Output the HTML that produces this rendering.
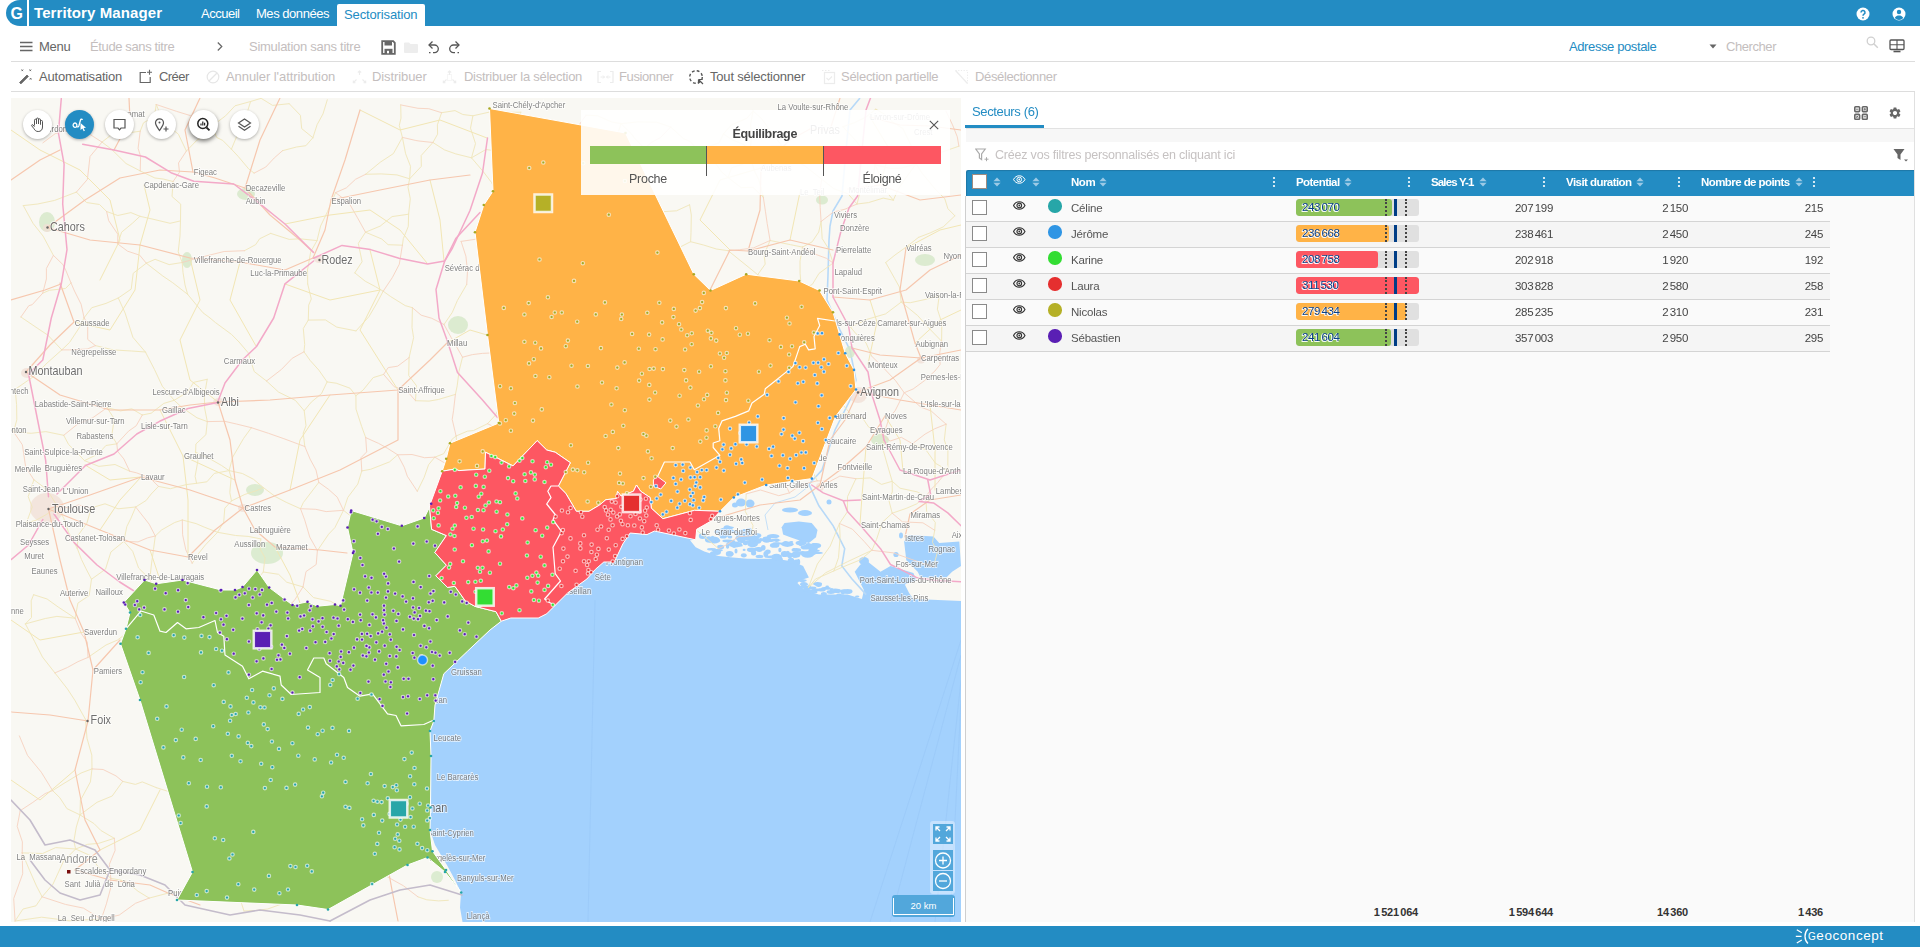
<!DOCTYPE html>
<html lang="fr">
<head>
<meta charset="utf-8">
<title>Territory Manager</title>
<style>
*{box-sizing:border-box;margin:0;padding:0}
html,body{width:1920px;height:947px;overflow:hidden;background:#fff;font-family:"Liberation Sans",sans-serif;font-size:13px;color:#444}
.abs{position:absolute}
.t{position:absolute;white-space:nowrap;line-height:1}
#topbar{position:absolute;left:6px;top:0;width:1914px;height:26px;background:#238cc3;border-radius:14px 0 0 14px/13px 0 0 13px}
#topbar .sep{position:absolute;left:21px;top:0;width:2px;height:26px;background:#fff}
#footer{position:absolute;left:0;top:926px;width:1920px;height:21px;background:#238cc3}
.hline{position:absolute;height:1px;background:#ddd}
.dis{color:#c4bebe}
.tb{position:absolute;top:70px;font-size:13px;line-height:14px;white-space:nowrap}
#map{position:absolute;left:11px;top:98px;width:950px;height:824px;background:#f9f8f4;overflow:hidden}
#panel{position:absolute;left:0;top:0;width:0;height:0}
.pbg{position:absolute;left:966px;width:949px}
.th{position:absolute;top:176px;font-size:11.5px;font-weight:bold;color:#fff;white-space:nowrap;line-height:13px;letter-spacing:-.45px}
.row{position:absolute;left:966px;width:864px;height:26px;border-bottom:1px solid #d4d4d4}
.cb{position:absolute;left:972px;width:15px;height:15px;background:#fff;border:1px solid #8a8a8a}
.dot{position:absolute;left:1048px;width:13.5px;height:13.5px;border-radius:50%}
  .nm{position:absolute;left:1071px;font-size:11.5px;color:#555;white-space:nowrap;line-height:14px;letter-spacing:-.2px}
.num{position:absolute;font-size:11.5px;color:#444;white-space:nowrap;line-height:13px;text-align:right;width:80px;letter-spacing:-.3px;word-spacing:-1.5px}
.bar{position:absolute;left:1296px;width:123px;height:17px;background:#e0e0e0;border-radius:3px;overflow:hidden}
.bar i{position:absolute;left:0;top:0;height:17px;display:block;border-radius:3px}
.bv{position:absolute;left:1302px;font-size:11.5px;color:#0a4189;white-space:nowrap;line-height:13px;letter-spacing:-.35px;word-spacing:-1.6px;text-shadow:-1px 1px 0 rgba(255,255,255,.9),0 1px 0 rgba(255,255,255,.9),-1px 0 0 rgba(255,255,255,.6)}
.dl{position:absolute;width:0;height:17px;border-left:2px dotted #444}
.sl{position:absolute;left:1394px;width:3px;height:17px;background:#003d86}
.tot{position:absolute;top:906px;font-size:11px;font-weight:bold;color:#333;white-space:nowrap;line-height:13px;text-align:right;width:80px;letter-spacing:-.2px;word-spacing:-1.5px}
.mbtn{position:absolute;top:110px;width:29px;height:29px;border-radius:50%;background:#fff;box-shadow:0 1px 3px rgba(0,0,0,.35)}
</style>
</head>
<body>
<!-- TOP BAR -->
<div id="topbar"><div class="sep"></div></div>
<div class="t" style="left:10.500px;top:6px;font-size:16px;font-weight:bold;color:#fff">G</div>
<div class="t" id="brand" style="left:34px;top:5px;font-size:15px;font-weight:bold;color:#fff;letter-spacing:.1px">Territory Manager</div>
<div class="t" id="nav1" style="letter-spacing:-0.5px;left:201px;top:7px;font-size:13px;color:#fff">Accueil</div>
<div class="t" id="nav2" style="letter-spacing:-0.46px;left:256px;top:7px;font-size:13px;color:#fff">Mes données</div>
<div class="abs" style="left:337px;top:4px;width:88px;height:22px;background:#fff;border-radius:2px 2px 0 0"></div>
<div class="t" id="nav3" style="letter-spacing:-0.13px;left:344px;top:8px;font-size:13px;color:#238cc3">Sectorisation</div>

<!-- ROW 2 -->
<div class="t" id="menu" style="letter-spacing:-0.3px;left:39px;top:40px;font-size:13px;color:#666">Menu</div>
<div class="t dis" id="etude" style="letter-spacing:-0.375px;left:90px;top:40px;font-size:13px">Étude sans titre</div>
<div class="t dis" id="simu" style="letter-spacing:-0.27px;left:249px;top:40px;font-size:13px">Simulation sans titre</div>
<div class="t" id="adr" style="letter-spacing:-0.39px;left:1569px;top:40px;font-size:13px;color:#238cc3">Adresse postale</div>
<div class="t dis" id="cher" style="letter-spacing:-0.43px;left:1726px;top:40px;font-size:13px">Chercher</div>
<div class="hline" style="left:11px;top:61px;width:1904px"></div>

<!-- ROW 3 -->
<div class="tb" id="tb1" style="letter-spacing:-0.21px;left:39px;color:#666">Automatisation</div>
<div class="tb" id="tb2" style="letter-spacing:-0.56px;left:159px;color:#666">Créer</div>
<div class="tb dis" id="tb3" style="letter-spacing:-0.08px;left:226px">Annuler l'attribution</div>
<div class="tb dis" id="tb4" style="letter-spacing:-0.09px;left:372px">Distribuer</div>
<div class="tb dis" id="tb5" style="letter-spacing:-0.27px;left:464px">Distribuer la sélection</div>
<div class="tb dis" id="tb6" style="letter-spacing:-0.39px;left:619px">Fusionner</div>
<div class="tb" id="tb7" style="letter-spacing:-0.19px;left:710px;color:#666">Tout sélectionner</div>
<div class="tb dis" id="tb8" style="letter-spacing:-0.28px;left:841px">Sélection partielle</div>
<div class="tb dis" id="tb9" style="letter-spacing:-0.36px;left:975px">Désélectionner</div>
<div class="hline" style="left:11px;top:91px;width:1904px"></div>


<!-- ICONS -->
<svg class="abs" style="left:20px;top:41px" width="13" height="11" viewBox="0 0 13 11"><path d="M0 1.500h12.500M0 5.500h12.500M0 9.500h12.500" stroke="#666" stroke-width="1.400"/></svg>
<svg class="abs" style="left:216px;top:41px" width="8" height="11" viewBox="0 0 8 11"><path d="M1.800 1.500l4 4-4 4" fill="none" stroke="#666" stroke-width="1.200"/></svg>
<svg class="abs" style="left:381px;top:40px" width="15" height="15" viewBox="0 0 15 15"><path d="M1.200 1.200h11l1.600 1.600v11H1.200z" fill="none" stroke="#666" stroke-width="1.800"/><rect x="3.500" y="1.500" width="7.500" height="4" fill="#666"/><rect x="3.500" y="8.800" width="8" height="5" fill="#666"/><rect x="6" y="10.800" width="2" height="2.500" fill="#fff"/></svg>
<svg class="abs" style="left:404px;top:42px" width="14" height="11" viewBox="0 0 14 11"><path d="M0 1.500a1 1 0 0 1 1-1h4l1.500 1.500H13a1 1 0 0 1 1 1V10a1 1 0 0 1-1 1H1a1 1 0 0 1-1-1z" fill="#ededed"/></svg>
<svg class="abs" style="left:427px;top:40px" width="13" height="14" viewBox="0 0 13 14"><path d="M5.500 1.500L2 5l3.500 3.500" fill="none" stroke="#555" stroke-width="1.300"/><path d="M2.200 5H7.500a3.800 3.800 0 0 1 0 7.600H6" fill="none" stroke="#555" stroke-width="1.300"/><path d="M2 12.600h1.500" stroke="#555" stroke-width="1.300"/></svg>
<svg class="abs" style="left:448px;top:40px" width="13" height="14" viewBox="0 0 13 14"><path d="M7.500 1.500L11 5 7.500 8.500" fill="none" stroke="#555" stroke-width="1.300"/><path d="M10.800 5H5.500a3.800 3.800 0 0 0 0 7.600H7" fill="none" stroke="#555" stroke-width="1.300"/><path d="M9.500 12.600H11" stroke="#555" stroke-width="1.300"/></svg>
<svg class="abs" style="left:1709px;top:44px" width="8" height="5" viewBox="0 0 8 5"><path d="M.5.500h7L4 4.500z" fill="#666"/></svg>
<svg class="abs" style="left:1866px;top:36px" width="13" height="13" viewBox="0 0 13 13"><circle cx="5" cy="5" r="3.800" fill="none" stroke="#d0d0d0" stroke-width="1.300"/><path d="M7.800 7.800l4 4" stroke="#d0d0d0" stroke-width="1.500"/></svg>
<svg class="abs" style="left:1889px;top:39px" width="16" height="14" viewBox="0 0 16 14"><rect x="1" y="1" width="14" height="9.500" rx="1" fill="none" stroke="#555" stroke-width="1.300"/><path d="M1 5.700h14M8 1v9.500" stroke="#555" stroke-width="1.100"/><path d="M4.500 12.500h7" stroke="#555" stroke-width="1.600"/></svg>
<svg class="abs" style="left:1856px;top:7px" width="14" height="14" viewBox="0 0 14 14"><circle cx="7" cy="7" r="6.500" fill="#fff"/><path d="M5 5.500a2 2 0 1 1 3 1.700c-.7.500-1 .8-1 1.600" fill="none" stroke="#238cc3" stroke-width="1.500"/><circle cx="7" cy="10.800" r=".9" fill="#238cc3"/></svg>
<svg class="abs" style="left:1892px;top:7px" width="14" height="14" viewBox="0 0 14 14"><circle cx="7" cy="7" r="6.500" fill="#fff"/><circle cx="7" cy="5" r="2.200" fill="#238cc3"/><path d="M2.800 10.800c1-1.800 2.600-2.400 4.200-2.400s3.200.6 4.200 2.400c-1 1.500-2.600 2.200-4.200 2.200s-3.200-.7-4.200-2.200z" fill="#238cc3"/></svg>
<!-- row3 icons -->
<svg class="abs" style="left:18px;top:68px" width="16" height="17" viewBox="0 0 16 17"><path d="M1.500 14.500l7.500-7.500 1.400 1.400-7.500 7.500z" fill="#666" stroke="#666" stroke-width=".8" stroke-linejoin="round"/><path d="M3.500 1.500l1.600 1.600M5.100 1.500L3.500 3.100M11.500 1.500l1.600 1.600M13.100 1.500l-1.600 1.600M11.800 10l1.600 1.600M13.400 10l-1.600 1.600" stroke="#666" stroke-width=".9"/></svg>
<svg class="abs" style="left:139px;top:69px" width="14" height="15" viewBox="0 0 14 15"><path d="M7 3.500H1.200v10h10V8" fill="none" stroke="#666" stroke-width="1.200"/><path d="M10.500.8v5M8 3.300h5" stroke="#666" stroke-width="1.100"/></svg>
<svg class="abs" style="left:206px;top:70px" width="14" height="14" viewBox="0 0 14 14"><circle cx="7" cy="7" r="5.800" fill="none" stroke="#e6e6e6" stroke-width="1.200"/><path d="M3 11L11 3" stroke="#e6e6e6" stroke-width="1.200"/></svg>
<svg class="abs" style="left:352px;top:70px" width="15" height="14" viewBox="0 0 15 14"><path d="M7.500 1v4M5.800 2.500L7.500 1l1.700 1.500M1.500 12.500l3-3M1.300 10.500v2.200h2.200M13.500 12.500l-3-3M13.700 10.500v2.200h-2.200" fill="none" stroke="#ececec" stroke-width="1.100"/></svg>
<svg class="abs" style="left:442px;top:70px" width="15" height="14" viewBox="0 0 15 14"><path d="M7.500 1v4M5.800 2.500L7.500 1l1.700 1.500M1.500 12.500l3-3M1.300 10.500v2.200h2.200M13.500 12.500l-3-3M13.700 10.500v2.200h-2.200" fill="none" stroke="#ececec" stroke-width="1.100"/><rect x="5.500" y="4.500" width="4" height="6" fill="none" stroke="#ececec" stroke-dasharray="1 1"/></svg>
<svg class="abs" style="left:597px;top:70px" width="17" height="14" viewBox="0 0 17 14"><path d="M4 1.500H1v11h3M13 1.500h3v11h-3" fill="none" stroke="#ececec" stroke-width="1.200"/><path d="M3.500 7h4M6 5.500L7.500 7 6 8.500M13.500 7h-4M11 5.500L9.500 7 11 8.500" fill="none" stroke="#ececec" stroke-width="1"/></svg>
<svg class="abs" style="left:688px;top:69px" width="17" height="17" viewBox="0 0 17 17"><circle cx="8" cy="8" r="6.300" fill="none" stroke="#555" stroke-width="1.400" stroke-dasharray="2.800 2.150"/><path d="M10.500 10.500h4M10.500 10.500v4M10.500 10.500l4.500 4.500" stroke="#555" stroke-width="1.200" fill="none"/></svg>
<svg class="abs" style="left:821px;top:69px" width="15" height="16" viewBox="0 0 15 16"><rect x="3.500" y="3.500" width="10" height="11" fill="none" stroke="#ececec" stroke-width="1.200"/><path d="M5.500 9l2 2 3.500-3.500" fill="none" stroke="#ececec" stroke-width="1.200"/><path d="M1 1.500h8" stroke="#ececec" stroke-dasharray="1.500 1.500"/></svg>
<svg class="abs" style="left:954px;top:69px" width="15" height="16" viewBox="0 0 15 16"><path d="M1.500 1.500l12 13" stroke="#ececec" stroke-width="1.200"/><path d="M1.500 1.500h12v13" fill="none" stroke="#ececec" stroke-dasharray="1.200 1.500"/></svg>

<!-- MAP -->
<div id="map">
<svg width="950" height="824" viewBox="11 98 950 824" style="position:absolute;left:0;top:0;font-family:'Liberation Sans',sans-serif">
<rect x="11" y="98" width="950" height="824" fill="#f9f8f3"/>
<polygon points="462.5,922.0 460.0,907.5 461.0,892.5 455.0,880.0 447.5,866.0 435.0,845.0 430.0,830.0 430.5,807.5 431.0,756.0 430.0,731.0 433.8,721.0 435.0,705.0 443.8,673.8 467.5,651.2 490.0,630.0 501.3,621.2 510.8,618.0 538.3,618.0 546.7,613.8 555.2,605.3 567.9,592.7 586.9,579.0 595.3,569.4 603.8,562.0 614.3,562.0 622.8,544.0 630.2,533.0 647.0,534.6 654.5,531.0 695.7,539.8 690.0,540.2 695.7,547.3 704.3,551.6 718.6,555.9 733.0,557.5 747.3,558.8 775.9,558.8 793.1,561.6 803.1,565.9 808.9,577.4 800.3,580.3 797.4,583.1 804.6,590.3 818.9,594.6 847.5,594.6 861.9,598.9 864.0,590.3 854.7,571.7 860.4,564.5 867.6,561.6 880.5,571.7 890.5,565.9 913.4,573.1 916.3,580.3 904.8,584.6 909.1,593.1 913.4,598.9 926.3,599.6 961.0,601.0 961.0,922.0" fill="#a3d1fd"/>
<g fill="#a3d1fd">
<polygon points="781.7,527.3 784.5,523.0 798.9,521.5 811.7,523.0 817.5,530.1 816.0,537.3 808.9,543.0 798.9,540.2 790.3,537.3 783.1,534.4"/>
<polygon points="904.1,541.6 909.1,535.1 933.5,536.6 939.2,543.0 959.3,541.6 961.0,565.9 952.1,571.7 946.4,577.4 920.6,577.4 917.7,571.7 906.3,560.2"/>
<ellipse cx="896" cy="554.5" rx="2.6" ry="2.6"/><ellipse cx="901" cy="535.5" rx="2" ry="3"/><ellipse cx="741" cy="502.5" rx="5" ry="4"/><ellipse cx="750" cy="503.5" rx="4.5" ry="4"/><ellipse cx="735" cy="505" rx="3" ry="2.500"/><ellipse cx="790" cy="510" rx="8" ry="2.500"/><ellipse cx="805" cy="513" rx="7" ry="3"/><ellipse cx="829" cy="502" rx="2.500" ry="2.500"/><ellipse cx="814" cy="547" rx="4" ry="4"/><ellipse cx="864" cy="561" rx="5" ry="4"/>
<ellipse cx="776.5" cy="556.9" rx="5.5" ry="3.1"/>
<ellipse cx="816.9" cy="552.9" rx="6.0" ry="1.2"/>
<ellipse cx="757.1" cy="535.6" rx="4.2" ry="2.3"/>
<ellipse cx="724.4" cy="534.3" rx="6.4" ry="2.9"/>
<ellipse cx="765.9" cy="554.1" rx="2.5" ry="3.1"/>
<ellipse cx="743.5" cy="532.1" rx="2.2" ry="1.1"/>
<ellipse cx="736.0" cy="550.9" rx="1.5" ry="2.5"/>
<ellipse cx="740.6" cy="538.3" rx="5.6" ry="2.1"/>
<ellipse cx="737.8" cy="545.7" rx="5.0" ry="1.1"/>
<ellipse cx="792.5" cy="561.3" rx="1.6" ry="2.7"/>
<ellipse cx="744.1" cy="549.9" rx="1.5" ry="1.1"/>
<ellipse cx="741.4" cy="540.3" rx="4.1" ry="2.7"/>
<ellipse cx="798.5" cy="562.0" rx="1.7" ry="3.1"/>
<ellipse cx="709.5" cy="539.7" rx="4.6" ry="3.0"/>
<ellipse cx="766.7" cy="538.4" rx="3.1" ry="1.4"/>
<ellipse cx="749.1" cy="535.2" rx="4.5" ry="2.8"/>
<ellipse cx="755.4" cy="543.1" rx="1.8" ry="3.0"/>
<ellipse cx="777.4" cy="558.9" rx="2.0" ry="2.0"/>
<ellipse cx="735.1" cy="544.5" rx="6.5" ry="2.9"/>
<ellipse cx="759.5" cy="556.4" rx="3.9" ry="1.6"/>
<ellipse cx="748.9" cy="531.3" rx="3.4" ry="3.2"/>
<ellipse cx="760.9" cy="539.6" rx="1.9" ry="1.6"/>
<ellipse cx="796.5" cy="562.3" rx="3.3" ry="2.7"/>
<ellipse cx="795.6" cy="554.9" rx="4.8" ry="2.7"/>
<ellipse cx="743.8" cy="555.3" rx="2.9" ry="2.1"/>
<ellipse cx="795.0" cy="554.7" rx="3.0" ry="3.1"/>
<ellipse cx="779.9" cy="550.0" rx="1.6" ry="2.2"/>
<ellipse cx="729.6" cy="553.9" rx="3.8" ry="2.8"/>
<ellipse cx="779.6" cy="559.3" rx="3.2" ry="2.4"/>
<ellipse cx="791.0" cy="560.6" rx="3.3" ry="2.9"/>
<ellipse cx="807.6" cy="554.6" rx="6.4" ry="3.1"/>
<ellipse cx="763.3" cy="547.8" rx="2.3" ry="2.8"/>
<ellipse cx="816.1" cy="545.5" rx="5.0" ry="2.6"/>
<ellipse cx="796.3" cy="550.0" rx="4.8" ry="1.9"/>
<ellipse cx="776.6" cy="558.3" rx="4.7" ry="2.6"/>
<ellipse cx="753.6" cy="553.0" rx="2.6" ry="2.5"/>
<ellipse cx="757.4" cy="534.7" rx="1.8" ry="1.3"/>
<ellipse cx="738.0" cy="532.8" rx="2.5" ry="1.1"/>
<ellipse cx="756.6" cy="541.4" rx="4.6" ry="2.3"/>
<ellipse cx="733.1" cy="542.6" rx="2.1" ry="2.8"/>
<ellipse cx="766.7" cy="539.6" rx="4.4" ry="3.1"/>
<ellipse cx="801.1" cy="543.0" rx="5.6" ry="2.4"/>
<ellipse cx="744.5" cy="531.1" rx="4.5" ry="2.2"/>
<ellipse cx="774.7" cy="540.1" rx="6.0" ry="1.0"/>
<ellipse cx="711.6" cy="549.3" rx="4.6" ry="1.3"/>
<ellipse cx="745.4" cy="543.6" rx="2.6" ry="1.6"/>
<ellipse cx="773.1" cy="536.2" rx="6.4" ry="2.1"/>
<ellipse cx="750.4" cy="538.7" rx="6.4" ry="2.1"/>
<ellipse cx="734.1" cy="545.5" rx="2.1" ry="2.4"/>
<ellipse cx="753.9" cy="537.6" rx="5.4" ry="2.8"/>
<ellipse cx="731.7" cy="531.7" rx="6.4" ry="1.6"/>
<ellipse cx="774.6" cy="545.4" rx="4.7" ry="2.3"/>
<ellipse cx="765.2" cy="539.5" rx="3.0" ry="2.2"/>
<ellipse cx="756.5" cy="540.5" rx="5.2" ry="2.3"/>
<ellipse cx="702.6" cy="535.9" rx="3.8" ry="3.0"/>
<ellipse cx="809.9" cy="548.5" rx="1.6" ry="2.7"/>
<ellipse cx="751.9" cy="549.8" rx="5.0" ry="2.4"/>
<ellipse cx="746.6" cy="541.9" rx="5.8" ry="1.4"/>
<ellipse cx="785.5" cy="543.6" rx="2.9" ry="2.7"/>
<ellipse cx="758.3" cy="548.6" rx="4.0" ry="1.7"/>
<ellipse cx="717.3" cy="550.2" rx="5.6" ry="1.2"/>
<ellipse cx="797.8" cy="553.5" rx="1.6" ry="2.6"/>
<ellipse cx="716.9" cy="551.3" rx="3.6" ry="1.4"/>
<ellipse cx="711.6" cy="541.3" rx="1.9" ry="1.1"/>
<ellipse cx="770.5" cy="556.9" rx="5.9" ry="1.3"/>
<ellipse cx="752.4" cy="538.5" rx="4.5" ry="2.1"/>
<ellipse cx="717.0" cy="552.1" rx="4.0" ry="3.0"/>
<ellipse cx="767.9" cy="551.7" rx="2.8" ry="2.2"/>
<ellipse cx="727.5" cy="541.0" rx="5.2" ry="1.4"/>
<ellipse cx="787.9" cy="553.2" rx="1.9" ry="2.5"/>
<ellipse cx="808.5" cy="545.7" rx="3.1" ry="2.8"/>
<ellipse cx="726.1" cy="530.0" rx="6.4" ry="2.5"/>
<ellipse cx="776.7" cy="540.2" rx="2.7" ry="1.7"/>
<ellipse cx="775.3" cy="540.0" rx="3.4" ry="1.3"/>
<ellipse cx="802.7" cy="552.9" rx="5.5" ry="2.0"/>
<ellipse cx="805.3" cy="547.3" rx="4.5" ry="2.3"/>
<ellipse cx="791.3" cy="542.0" rx="2.0" ry="1.1"/>
<ellipse cx="810.0" cy="545.7" rx="5.3" ry="1.0"/>
<ellipse cx="776.1" cy="543.4" rx="3.8" ry="1.2"/>
<ellipse cx="717.5" cy="531.8" rx="3.4" ry="1.8"/>
<ellipse cx="730.0" cy="536.9" rx="2.3" ry="1.6"/>
<ellipse cx="727.6" cy="545.7" rx="1.7" ry="3.0"/>
<ellipse cx="784.7" cy="554.0" rx="3.9" ry="3.1"/>
<ellipse cx="712.9" cy="553.7" rx="3.0" ry="2.5"/>
<ellipse cx="727.0" cy="528.4" rx="3.5" ry="3.1"/>
<ellipse cx="743.9" cy="538.4" rx="3.8" ry="1.6"/>
<ellipse cx="790.3" cy="555.9" rx="2.3" ry="1.5"/>
<ellipse cx="779.4" cy="543.5" rx="6.4" ry="1.0"/>
<ellipse cx="763.4" cy="540.1" rx="2.0" ry="1.2"/>
<ellipse cx="811.2" cy="546.1" rx="6.2" ry="1.1"/>
<ellipse cx="730.2" cy="542.5" rx="3.0" ry="1.1"/>
<ellipse cx="720.6" cy="546.9" rx="3.5" ry="2.2"/>
<ellipse cx="708.6" cy="538.5" rx="2.0" ry="2.2"/>
<ellipse cx="814.1" cy="550.7" rx="5.8" ry="1.5"/>
<ellipse cx="759.3" cy="549.6" rx="3.4" ry="2.4"/>
<ellipse cx="736.8" cy="544.3" rx="5.6" ry="1.5"/>
<ellipse cx="712.6" cy="538.4" rx="1.9" ry="2.7"/>
<ellipse cx="728.9" cy="528.6" rx="3.6" ry="2.3"/>
<ellipse cx="728.9" cy="527.6" rx="5.0" ry="1.1"/>
<ellipse cx="723.2" cy="537.3" rx="3.4" ry="1.2"/>
<ellipse cx="751.0" cy="538.5" rx="5.3" ry="2.2"/>
<ellipse cx="810.9" cy="553.1" rx="5.3" ry="2.3"/>
<ellipse cx="789.7" cy="555.2" rx="2.8" ry="2.8"/>
<ellipse cx="746.2" cy="530.6" rx="1.8" ry="1.4"/>
<ellipse cx="731.1" cy="554.1" rx="2.9" ry="1.1"/>
<ellipse cx="794.2" cy="549.0" rx="1.6" ry="1.1"/>
<ellipse cx="714.4" cy="540.4" rx="5.8" ry="3.1"/>
<ellipse cx="752.0" cy="540.6" rx="3.2" ry="1.0"/>
<ellipse cx="787.4" cy="544.2" rx="6.2" ry="2.7"/>
<ellipse cx="712.9" cy="538.6" rx="6.1" ry="2.0"/>
<ellipse cx="752.7" cy="544.0" rx="5.3" ry="3.1"/>
<ellipse cx="800.6" cy="543.0" rx="1.8" ry="3.2"/>
<ellipse cx="747.5" cy="534.3" rx="2.9" ry="1.4"/>
<ellipse cx="768.9" cy="540.4" rx="5.3" ry="1.5"/>
<ellipse cx="742.3" cy="535.7" rx="6.4" ry="2.8"/>
<ellipse cx="800.5" cy="579.9" rx="1.8" ry="2.1"/>
<ellipse cx="839.1" cy="594.4" rx="2.8" ry="1.0"/>
<ellipse cx="831.8" cy="589.5" rx="2.1" ry="1.6"/>
<ellipse cx="818.6" cy="584.8" rx="3.2" ry="2.1"/>
<ellipse cx="843.7" cy="591.4" rx="3.4" ry="2.2"/>
<ellipse cx="821.9" cy="589.7" rx="3.9" ry="1.8"/>
<ellipse cx="803.8" cy="584.2" rx="3.5" ry="2.1"/>
<ellipse cx="847.7" cy="591.4" rx="4.8" ry="2.3"/>
<ellipse cx="811.8" cy="587.9" rx="4.6" ry="1.4"/>
<ellipse cx="809.0" cy="590.6" rx="4.2" ry="1.3"/>
<ellipse cx="826.1" cy="588.2" rx="4.7" ry="1.5"/>
<ellipse cx="816.5" cy="589.9" rx="4.9" ry="1.3"/>
<ellipse cx="835.1" cy="589.9" rx="2.1" ry="1.3"/>
<ellipse cx="837.2" cy="590.9" rx="3.9" ry="2.1"/>
<ellipse cx="813.1" cy="592.0" rx="4.4" ry="1.7"/>
<ellipse cx="804.7" cy="580.5" rx="2.0" ry="1.1"/>
<ellipse cx="808.0" cy="590.2" rx="1.9" ry="2.1"/>
<ellipse cx="802.3" cy="580.7" rx="2.8" ry="1.7"/>
<ellipse cx="842.9" cy="593.1" rx="1.8" ry="1.6"/>
<ellipse cx="805.8" cy="589.7" rx="2.8" ry="2.0"/>
<ellipse cx="848.1" cy="592.6" rx="2.5" ry="1.2"/>
<ellipse cx="830.9" cy="592.0" rx="4.3" ry="1.9"/>
<ellipse cx="817.5" cy="583.7" rx="4.5" ry="1.8"/>
<ellipse cx="813.7" cy="591.3" rx="1.8" ry="1.4"/>
<ellipse cx="804.3" cy="587.0" rx="4.9" ry="1.8"/>
<ellipse cx="804.1" cy="584.2" rx="4.3" ry="1.0"/>
<ellipse cx="827.2" cy="586.9" rx="1.8" ry="1.4"/>
<ellipse cx="823.9" cy="593.9" rx="3.0" ry="1.9"/>
<ellipse cx="809.2" cy="586.5" rx="1.8" ry="1.6"/>
<ellipse cx="857.2" cy="596.4" rx="2.2" ry="1.0"/>
</g>
<polyline points="860,98 850,110 846,150 842,196 833,211 830,226 829,240 828,275 827,300 840,330 850,350 856,380 850,400 835,430 822,470 808.9,484.3 818.9,505.8 833.2,525.8 844.7,548.7 841.8,565.9 851.8,578.8 866.2,594.6" fill="none" stroke="#b7d9f8" stroke-width="1.600"/>
<polyline points="809,486 795,497 775,503 765,515 768,530" fill="none" stroke="#c4e0f8" stroke-width="1"/>
<g fill="#d5e8c8" opacity=".8"><ellipse cx="267" cy="553" rx="16" ry="11"/><ellipse cx="255" cy="490" rx="9" ry="6"/><ellipse cx="458" cy="325" rx="10" ry="9"/><ellipse cx="47" cy="222" rx="8" ry="10"/><ellipse cx="246" cy="194" rx="9" ry="6"/><ellipse cx="187" cy="260" rx="5" ry="8"/><ellipse cx="925" cy="260" rx="10" ry="6"/><ellipse cx="880" cy="440" rx="9" ry="6"/><ellipse cx="437" cy="877" rx="6" ry="6"/><ellipse cx="822" cy="200" rx="6" ry="4.500"/><ellipse cx="850" cy="352" rx="5" ry="6"/></g>
<g fill="#f1dfd6" opacity=".75"><ellipse cx="47" cy="508" rx="17" ry="15"/><ellipse cx="27" cy="373" rx="6" ry="5"/><ellipse cx="219" cy="402" rx="6" ry="4"/><ellipse cx="243" cy="508" rx="5" ry="4"/><ellipse cx="858" cy="395" rx="9" ry="8"/><ellipse cx="319" cy="259" rx="5" ry="4"/><ellipse cx="47" cy="228" rx="4" ry="4"/><ellipse cx="820" cy="487" rx="4" ry="4"/><ellipse cx="921" cy="360" rx="4" ry="3.500"/></g>
<g fill="none" stroke="#96c6f6" stroke-width=".8" opacity=".7"><path d="M595 600L588 922M961 640L870 922M961 655L890 922M961 680L935 922M961 700L950 922"/></g>
<g fill="none" stroke="#f1e7ba" stroke-width="1" stroke-linejoin="round" stroke-linecap="round" opacity="0.9">
<polyline points="439.3,560.0 443.0,573.9 447.1,584.6 446.4,596.2"/>
<polyline points="439.3,560.0 430.9,555.9 420.4,547.3 405.3,543.5"/>
<polyline points="439.3,560.0 452.2,549.8 465.5,545.6 478.9,541.2"/>
<polyline points="892.2,481.3 892.3,492.0 888.7,499.6 892.2,513.2"/>
<polyline points="892.2,481.3 881.6,484.4 870.4,477.9 855.9,478.7"/>
<polyline points="492.5,583.1 506.6,576.7 519.1,571.8 527.4,566.4"/>
<polyline points="492.5,583.1 487.8,568.0 487.4,551.5 478.9,541.2"/>
<polyline points="182.3,520.0 174.7,522.5 161.5,530.0 155.3,536.0"/>
<polyline points="182.3,520.0 196.1,523.6 204.2,527.1 217.6,532.3"/>
<polyline points="92.0,768.9 81.1,773.0 62.0,784.6 52.6,790.6"/>
<polyline points="92.0,768.9 90.4,781.9 80.4,800.4 80.0,814.9"/>
<polyline points="670.7,127.0 683.4,138.6 690.3,141.6 698.7,151.0"/>
<polyline points="670.7,127.0 656.5,122.2 637.6,121.9 621.0,123.7"/>
<polyline points="156.2,104.5 154.5,116.4 143.5,122.8 140.2,131.2"/>
<polyline points="156.2,104.5 163.6,122.0 178.4,134.2 186.4,151.0"/>
<polyline points="512.2,141.8 517.7,131.9 519.1,121.0 520.8,112.2"/>
<polyline points="512.2,141.8 496.1,150.9 485.9,149.5 471.5,157.8"/>
<polyline points="187.6,294.3 195.8,304.2 203.0,312.8 209.4,317.5"/>
<polyline points="187.6,294.3 185.0,284.9 183.0,272.4 182.2,262.5"/>
<polyline points="187.6,294.3 172.7,282.7 162.8,276.0 146.3,263.2"/>
<polyline points="33.9,479.8 44.5,487.7 50.7,495.5 57.4,506.3"/>
<polyline points="33.9,479.8 28.2,496.6 32.2,507.1 26.3,523.1"/>
<polyline points="427.9,796.3 414.8,794.2 400.5,795.4 382.2,796.8"/>
<polyline points="307.7,284.0 311.3,299.0 308.7,305.1 308.3,320.1"/>
<polyline points="307.7,284.0 307.5,270.0 310.7,251.8 317.0,240.6"/>
<polyline points="282.5,150.7 296.5,147.0 305.9,145.7 312.9,137.7"/>
<polyline points="740.6,426.7 749.3,433.9 761.1,442.2 768.8,447.7"/>
<polyline points="817.7,415.1 832.2,413.0 838.8,413.7 850.1,413.4"/>
<polyline points="817.7,415.1 811.3,427.1 807.1,437.5 803.9,444.5"/>
<polyline points="946.1,424.2 944.3,439.9 947.9,451.0 947.8,470.3"/>
<polyline points="75.1,618.2 77.9,603.1 89.2,595.5 91.5,579.2"/>
<polyline points="752.4,317.5 759.0,325.2 769.3,338.8 775.9,346.8"/>
<polyline points="752.4,317.5 753.6,302.9 755.7,287.9 757.7,274.7"/>
<polyline points="118.3,298.0 106.0,303.4 91.8,307.7 84.1,317.7"/>
<polyline points="118.3,298.0 131.2,289.1 133.2,273.3 146.3,263.2"/>
<polyline points="102.0,142.1 111.6,134.6 129.6,132.7 140.2,131.2"/>
<polyline points="102.0,142.1 111.4,149.2 126.0,163.5 140.2,170.9"/>
<polyline points="770.1,240.5 779.4,242.4 790.6,244.7 802.5,247.1"/>
<polyline points="770.1,240.5 764.1,254.4 765.2,264.1 757.7,274.7"/>
<polyline points="130.7,630.1 138.3,637.5 152.3,642.1 165.0,648.1"/>
<polyline points="116.8,443.8 105.9,445.5 98.3,453.9 84.5,460.6"/>
<polyline points="209.4,317.5 215.5,322.6 231.5,334.4 239.2,342.2"/>
<polyline points="297.0,831.7 293.3,823.3 288.0,817.5 280.0,806.3"/>
<polyline points="297.0,831.7 302.3,843.7 303.6,853.1 307.4,863.4"/>
<polyline points="207.3,421.6 205.9,434.7 195.9,444.0 195.6,452.2"/>
<polyline points="207.3,421.6 197.0,417.8 181.6,407.2 174.2,400.3"/>
<polyline points="207.3,421.6 204.6,408.0 204.4,395.5 207.2,379.3"/>
<polyline points="746.8,367.0 756.3,359.0 763.0,356.6 775.9,346.8"/>
<polyline points="91.5,579.2 86.0,568.7 81.5,559.5 77.3,548.5"/>
<polyline points="91.5,579.2 105.5,569.2 110.9,552.0 123.8,541.4"/>
<polyline points="238.3,594.7 247.8,588.0 253.8,583.5 263.3,572.0"/>
<polyline points="238.3,594.7 245.3,602.2 257.6,618.1 270.8,627.0"/>
<polyline points="361.8,470.9 370.6,469.3 389.5,461.9 397.7,454.8"/>
<polyline points="361.8,470.9 357.8,484.1 347.8,497.4 343.5,510.3"/>
<polyline points="925.8,496.4 926.6,511.4 935.3,522.4 934.7,530.3"/>
<polyline points="925.8,496.4 917.2,491.9 900.0,488.2 892.2,481.3"/>
<polyline points="180.5,220.9 180.7,204.1 172.0,196.5 173.1,181.5"/>
<polyline points="180.5,220.9 170.1,223.3 153.0,219.2 139.9,216.3"/>
<polyline points="180.5,220.9 180.0,235.8 178.2,251.8 182.2,262.5"/>
<polyline points="244.5,250.7 255.7,244.6 259.6,238.8 270.7,233.4"/>
<polyline points="193.7,886.3 202.9,884.1 218.0,886.6 227.8,881.7"/>
<polyline points="193.7,886.3 195.2,875.3 205.3,860.2 209.8,844.4"/>
<polyline points="409.6,178.8 408.0,187.2 410.3,198.8 408.6,214.2"/>
<polyline points="409.6,178.8 410.5,166.3 405.6,153.7 402.4,137.4"/>
<polyline points="409.6,178.8 421.3,166.4 421.2,155.5 432.9,142.5"/>
<polyline points="42.1,896.8 36.0,905.8 23.0,909.0 15.1,921.0"/>
<polyline points="42.1,896.8 36.5,886.1 29.6,870.4 22.2,852.9"/>
<polyline points="42.1,896.8 53.0,884.1 63.6,861.1 75.6,849.0"/>
<polyline points="233.9,681.0 224.6,673.1 216.9,655.6 209.7,645.5"/>
<polyline points="233.9,681.0 213.9,676.6 199.4,672.3 183.5,672.4"/>
<polyline points="251.7,780.6 263.6,787.9 274.4,795.3 280.0,806.3"/>
<polyline points="577.6,337.3 587.0,330.0 596.3,323.0 605.3,321.1"/>
<polyline points="577.6,337.3 566.8,350.6 561.6,360.5 550.3,369.6"/>
<polyline points="577.6,337.3 568.0,325.7 551.5,323.1 542.9,313.0"/>
<polyline points="71.0,282.9 65.5,288.5 49.4,290.3 42.7,293.2"/>
<polyline points="885.7,262.5 895.0,255.0 906.1,247.1 918.5,237.4"/>
<polyline points="885.7,262.5 894.8,278.8 899.4,287.0 901.2,302.1"/>
<polyline points="20.9,317.0 37.1,328.0 47.8,335.1 61.8,349.9"/>
<polyline points="432.9,142.5 437.6,134.2 437.4,124.8 441.6,112.7"/>
<polyline points="174.2,400.3 163.8,403.4 151.2,413.2 142.3,415.0"/>
<polyline points="174.2,400.3 187.4,392.2 193.7,382.3 207.2,379.3"/>
<polyline points="352.7,836.8 361.6,832.0 376.1,834.0 387.9,833.6"/>
<polyline points="22.2,852.9 42.6,853.5 55.7,847.6 75.6,849.0"/>
<polyline points="25.4,623.9 31.5,617.5 31.2,600.8 33.6,594.7"/>
<polyline points="25.4,623.9 45.3,618.5 56.9,616.4 75.1,618.2"/>
<polyline points="77.3,548.5 78.0,535.4 86.9,523.2 91.3,507.9"/>
<polyline points="77.3,548.5 68.4,532.0 63.9,518.6 57.4,506.3"/>
<polyline points="342.8,664.8 348.2,679.0 349.6,686.7 348.5,698.9"/>
<polyline points="405.5,752.9 394.8,764.6 390.7,783.3 382.2,796.8"/>
<polyline points="833.9,570.9 828.1,573.5 815.4,579.1 808.4,587.5"/>
<polyline points="833.9,570.9 842.8,567.0 860.7,559.7 871.9,550.3"/>
<polyline points="833.9,570.9 838.5,557.7 840.1,537.0 839.5,523.5"/>
<polyline points="605.0,411.6 605.8,432.4 611.4,449.4 609.0,465.3"/>
<polyline points="605.0,411.6 583.4,412.7 561.9,413.3 545.6,412.1"/>
<polyline points="704.1,416.7 692.3,406.8 681.0,399.0 668.7,395.3"/>
<polyline points="85.4,719.2 87.0,738.3 91.8,755.1 92.0,768.9"/>
<polyline points="85.4,719.2 74.8,700.2 67.4,688.9 54.9,672.9"/>
<polyline points="33.6,594.7 47.1,599.0 58.2,607.0 75.1,618.2"/>
<polyline points="466.7,284.5 457.4,300.5 452.3,312.4 444.0,324.5"/>
<polyline points="675.4,507.7 680.8,499.1 693.8,495.1 698.8,483.5"/>
<polyline points="675.4,507.7 666.5,492.3 662.0,483.4 654.6,472.3"/>
<polyline points="250.6,101.5 261.1,98.3 272.6,105.4 289.2,103.7"/>
<polyline points="250.6,101.5 235.0,105.8 225.6,115.8 212.1,126.0"/>
<polyline points="250.6,101.5 246.2,115.6 238.7,131.6 231.4,149.2"/>
<polyline points="294.0,658.9 284.3,651.2 279.9,640.8 270.8,627.0"/>
<polyline points="294.0,658.9 294.1,673.7 285.1,688.4 283.6,701.3"/>
<polyline points="429.3,837.5 411.8,837.1 399.6,831.7 387.9,833.6"/>
<polyline points="195.6,452.2 197.9,460.8 195.1,476.4 196.6,483.3"/>
<polyline points="195.6,452.2 210.6,459.2 221.4,465.4 229.1,470.6"/>
<polyline points="850.1,413.4 840.8,402.4 834.9,391.3 826.6,383.4"/>
<polyline points="850.1,413.4 862.9,418.5 868.5,426.9 883.4,435.3"/>
<polyline points="135.7,507.0 146.1,500.5 151.1,494.1 158.5,486.4"/>
<polyline points="270.7,233.4 289.2,239.4 299.9,238.8 317.0,240.6"/>
<polyline points="307.8,793.5 298.2,799.3 287.0,803.9 280.0,806.3"/>
<polyline points="947.8,470.3 935.5,463.3 926.0,450.0 912.5,443.7"/>
<polyline points="842.9,126.7 854.6,122.6 865.8,117.2 875.8,109.1"/>
<polyline points="842.9,126.7 855.5,140.3 865.4,152.6 875.0,164.9"/>
<polyline points="301.7,753.7 306.3,746.1 319.2,735.2 325.5,726.7"/>
<polyline points="301.7,753.7 293.1,737.9 287.0,718.9 283.6,701.3"/>
<polyline points="23.3,205.6 37.7,204.0 54.7,200.4 76.4,192.1"/>
<polyline points="23.3,205.6 33.0,223.3 43.1,236.1 53.4,255.4"/>
<polyline points="441.6,112.7 455.0,110.6 462.8,114.5 472.9,115.8"/>
<polyline points="801.5,290.5 812.4,284.3 819.0,273.4 833.2,263.0"/>
<polyline points="801.5,290.5 800.1,273.3 800.0,261.1 802.5,247.1"/>
<polyline points="801.5,290.5 785.1,286.2 772.1,282.3 757.7,274.7"/>
<polyline points="609.0,465.3 593.5,457.0 579.6,450.4 563.9,442.7"/>
<polyline points="662.1,258.6 666.7,271.8 672.3,274.5 674.5,287.3"/>
<polyline points="690.6,241.7 679.6,247.3 675.4,254.2 662.1,258.6"/>
<polyline points="690.6,241.7 691.0,232.7 691.3,215.0 689.6,204.8"/>
<polyline points="266.5,381.0 254.2,371.5 248.1,352.7 239.2,342.2"/>
<polyline points="875.0,164.9 881.1,178.2 885.0,190.0 893.3,200.2"/>
<polyline points="875.0,164.9 890.7,168.5 901.1,168.2 916.2,163.9"/>
<polyline points="366.7,567.5 369.4,554.5 369.5,548.6 373.7,535.9"/>
<polyline points="366.7,567.5 376.8,561.0 396.4,552.5 405.3,543.5"/>
<polyline points="630.3,263.3 631.1,277.3 631.1,283.9 628.0,297.2"/>
<polyline points="209.8,844.4 219.3,856.3 224.3,872.9 227.8,881.7"/>
<polyline points="209.8,844.4 224.1,846.7 235.5,852.0 252.9,853.8"/>
<polyline points="826.6,383.4 825.1,392.5 820.9,403.4 817.7,415.1"/>
<polyline points="826.6,383.4 807.9,388.9 797.3,391.9 782.5,400.4"/>
<polyline points="84.5,460.6 75.6,451.4 68.6,444.5 63.7,435.3"/>
<polyline points="84.5,460.6 98.9,466.4 115.0,464.5 129.7,471.2"/>
<polyline points="472.9,115.8 470.5,128.1 475.5,143.6 471.5,157.8"/>
<polyline points="781.8,145.6 775.5,137.8 761.6,118.7 753.1,111.0"/>
<polyline points="781.8,145.6 791.5,158.9 804.9,165.9 821.7,179.2"/>
<polyline points="139.9,216.3 130.9,212.6 117.8,215.5 106.6,211.5"/>
<polyline points="139.9,216.3 132.7,223.0 121.6,232.2 117.7,243.9"/>
<polyline points="916.2,163.9 922.0,173.2 929.0,181.5 934.6,188.5"/>
<polyline points="916.2,163.9 914.5,152.4 910.4,144.2 902.9,128.6"/>
<polyline points="217.6,532.3 223.7,522.2 224.8,508.2 231.5,500.9"/>
<polyline points="304.2,410.7 306.0,425.7 303.2,433.1 304.8,446.5"/>
<polyline points="304.2,410.7 311.3,402.1 321.5,393.6 327.1,381.9"/>
<polyline points="304.2,410.7 295.4,400.4 278.6,392.1 266.5,381.0"/>
<polyline points="204.9,803.2 191.3,797.4 172.9,792.9 156.2,787.6"/>
<polyline points="934.7,530.3 932.5,542.3 937.5,551.7 933.5,566.8"/>
<polyline points="555.1,260.0 566.9,261.4 583.4,258.4 595.5,253.7"/>
<polyline points="555.1,260.0 563.7,269.6 574.3,278.2 588.8,288.7"/>
<polyline points="519.5,512.7 529.2,508.2 539.3,501.8 546.6,497.3"/>
<polyline points="586.0,115.2 597.4,115.7 611.5,121.9 621.0,123.7"/>
<polyline points="522.2,437.9 526.8,447.1 535.1,455.5 541.9,466.0"/>
<polyline points="522.2,437.9 527.2,427.3 534.8,416.9 545.6,412.1"/>
<polyline points="263.4,487.6 256.0,490.8 244.9,494.4 231.5,500.9"/>
<polyline points="263.4,487.6 253.5,479.3 242.4,473.5 229.1,470.6"/>
<polyline points="462.5,357.2 459.0,371.3 457.2,385.8 455.4,394.4"/>
<polyline points="188.8,608.6 180.2,612.3 171.6,614.1 158.1,611.7"/>
<polyline points="188.8,608.6 196.5,617.4 201.7,631.8 209.7,645.5"/>
<polyline points="893.3,200.2 883.2,198.1 868.5,202.6 857.0,204.0"/>
<polyline points="893.3,200.2 898.1,189.5 906.4,177.0 916.2,163.9"/>
<polyline points="753.1,111.0 746.9,118.3 731.5,124.8 723.4,133.9"/>
<polyline points="753.1,111.0 750.7,123.8 751.0,142.1 749.5,155.6"/>
<polyline points="664.6,361.3 654.0,359.0 646.2,354.7 637.0,349.2"/>
<polyline points="346.1,610.1 349.8,597.8 356.5,578.8 366.7,567.5"/>
<polyline points="365.7,437.6 361.6,426.3 356.0,409.1 355.9,395.7"/>
<polyline points="513.2,225.5 505.4,212.7 506.7,210.2 498.2,197.3"/>
<polyline points="617.9,534.8 607.7,547.6 593.6,556.2 581.6,570.8"/>
<polyline points="871.6,356.1 866.0,342.8 856.0,333.8 850.7,327.3"/>
<polyline points="307.4,863.4 296.1,873.0 289.0,893.3 285.3,902.7"/>
<polyline points="857.0,204.0 860.4,190.8 873.0,178.8 875.0,164.9"/>
<polyline points="254.1,173.1 248.7,168.9 238.1,156.3 231.4,149.2"/>
<polyline points="803.9,444.5 791.9,443.7 781.0,448.5 768.8,447.7"/>
<polyline points="763.3,197.3 753.1,187.4 741.1,187.6 728.0,177.5"/>
<polyline points="763.3,197.3 758.8,179.7 755.0,172.2 749.5,155.6"/>
<polyline points="391.7,664.8 380.1,660.7 371.0,649.3 364.6,641.5"/>
<polyline points="391.7,664.8 376.7,662.8 362.7,664.2 342.8,664.8"/>
<polyline points="934.6,188.5 944.8,198.8 947.9,208.7 954.9,215.8"/>
<polyline points="186.4,151.0 197.0,140.1 205.9,135.3 212.1,126.0"/>
<polyline points="182.2,262.5 169.1,264.6 155.1,259.3 146.3,263.2"/>
<polyline points="318.8,482.4 313.7,489.0 303.3,502.6 300.5,508.7"/>
<polyline points="252.9,853.8 248.2,859.4 233.5,874.3 227.8,881.7"/>
<polyline points="698.7,151.0 703.6,148.1 719.0,142.9 723.4,133.9"/>
<polyline points="15.2,389.3 16.6,404.7 16.8,419.8 13.6,431.9"/>
<polyline points="15.2,389.3 34.5,375.9 45.9,364.1 61.8,349.9"/>
<polyline points="227.8,881.7 236.7,889.7 241.8,904.3 244.0,911.0"/>
<polyline points="251.4,427.7 243.6,438.4 232.7,457.1 229.1,470.6"/>
<polyline points="365.6,174.3 381.2,173.9 396.9,174.9 409.6,178.8"/>
<polyline points="365.6,174.3 380.3,162.2 393.4,153.6 402.4,137.4"/>
<polyline points="158.5,486.4 170.3,488.7 186.3,484.6 196.6,483.3"/>
<polyline points="356.0,330.9 368.9,316.7 376.3,304.1 383.2,291.2"/>
<polyline points="356.0,330.9 336.7,327.1 325.4,319.9 308.3,320.1"/>
<polyline points="289.2,103.7 300.4,115.3 301.7,128.6 312.9,137.7"/>
<polyline points="723.4,133.9 731.6,139.5 744.4,144.8 749.5,155.6"/>
<polyline points="75.6,849.0 73.9,841.0 76.3,827.0 80.0,814.9"/>
<polyline points="75.6,849.0 87.7,844.3 98.5,843.4 114.3,838.3"/>
<polyline points="75.6,849.0 89.9,855.4 98.5,867.3 110.8,878.3"/>
<polyline points="417.3,491.3 424.1,477.5 428.6,464.7 434.8,457.2"/>
<polyline points="939.2,295.7 925.1,299.5 910.3,302.7 901.2,302.1"/>
<polyline points="939.2,295.7 937.4,309.2 941.8,322.8 941.6,341.2"/>
<polyline points="584.5,188.2 594.1,182.3 600.1,171.9 612.2,167.1"/>
<polyline points="430.1,650.4 442.6,647.0 465.6,642.9 478.9,635.5"/>
<polyline points="563.9,442.7 556.3,433.3 552.7,423.3 545.6,412.1"/>
<polyline points="751.8,535.7 753.0,525.4 745.3,511.5 746.2,493.9"/>
<polyline points="709.9,291.3 703.4,299.6 695.5,311.5 691.6,316.6"/>
<polyline points="709.9,291.3 698.1,292.4 685.1,290.6 674.5,287.3"/>
<polyline points="114.3,838.3 100.9,830.5 93.9,823.5 80.0,814.9"/>
<polyline points="728.2,250.7 739.9,260.2 749.8,268.2 757.7,274.7"/>
<polyline points="728.2,250.7 716.4,249.0 703.5,245.0 690.6,241.7"/>
<polyline points="88.0,657.4 106.0,645.0 117.4,640.1 130.7,630.1"/>
<polyline points="76.4,192.1 86.5,202.5 99.5,204.5 106.6,211.5"/>
<polyline points="412.4,307.7 405.2,305.6 390.7,296.6 383.2,291.2"/>
<polyline points="412.4,307.7 412.0,327.5 413.6,337.7 409.1,357.6"/>
<polyline points="782.5,400.4 792.6,406.3 808.0,408.6 817.7,415.1"/>
<polyline points="782.5,400.4 772.9,393.1 755.4,379.2 746.8,367.0"/>
<polyline points="317.4,550.6 328.6,534.2 334.9,527.6 343.5,510.3"/>
<polyline points="415.5,400.7 429.1,401.1 438.3,399.5 455.4,394.4"/>
<polyline points="546.6,497.3 551.8,510.8 547.2,529.6 551.1,546.1"/>
<polyline points="749.5,155.6 742.8,164.2 731.6,167.8 728.0,177.5"/>
<polyline points="209.7,645.5 197.7,651.2 190.7,662.7 183.5,672.4"/>
<polyline points="348.5,698.9 337.4,709.4 336.8,718.5 325.5,726.7"/>
<polyline points="775.9,346.8 777.0,367.4 781.1,383.5 782.5,400.4"/>
<polyline points="355.9,395.7 350.0,388.2 336.2,383.2 327.1,381.9"/>
<polyline points="355.9,395.7 363.0,390.2 373.2,377.6 383.6,374.4"/>
<polyline points="192.2,563.3 198.8,553.2 205.5,544.8 217.6,532.3"/>
<polyline points="850.7,327.3 867.1,319.3 885.6,313.9 901.2,302.1"/>
<polyline points="26.3,523.1 36.1,520.2 46.6,514.4 57.4,506.3"/>
<polyline points="527.4,566.4 533.3,558.9 545.0,549.6 551.1,546.1"/>
<polyline points="216.6,731.8 205.2,720.0 200.3,714.7 188.1,703.9"/>
<polyline points="216.6,731.8 219.4,712.4 226.6,698.0 233.9,681.0"/>
<polyline points="216.6,731.8 231.2,744.2 236.2,763.1 251.7,780.6"/>
<polyline points="883.4,435.3 883.2,450.1 887.1,463.9 892.2,481.3"/>
<polyline points="408.6,214.2 408.3,226.4 403.3,238.7 402.4,245.2"/>
<polyline points="408.6,214.2 392.1,216.6 380.2,226.1 365.5,232.2"/>
<polyline points="365.5,232.2 381.8,239.0 388.1,244.7 402.4,245.2"/>
<polyline points="365.5,232.2 358.3,243.4 362.1,261.7 354.8,272.9"/>
<polyline points="285.3,902.7 267.7,909.0 256.2,910.4 244.0,911.0"/>
<polyline points="61.8,349.9 69.5,342.5 79.4,327.5 84.1,317.7"/>
<polyline points="361.7,758.1 367.6,771.5 377.3,783.1 382.2,796.8"/>
<polyline points="839.5,523.5 847.5,511.6 847.5,496.7 855.9,478.7"/>
<polyline points="260.8,538.9 260.3,549.5 265.0,557.7 263.3,572.0"/>
<polyline points="260.8,538.9 248.1,536.4 235.6,535.5 217.6,532.3"/>
<polyline points="465.9,483.8 459.3,468.1 458.1,455.5 456.1,436.0"/>
<polyline points="156.2,787.6 142.3,781.9 135.4,784.4 122.7,781.4"/>
<polyline points="304.0,351.8 304.7,344.5 303.3,328.5 308.3,320.1"/>
<polyline points="304.0,351.8 310.2,360.5 318.9,370.2 327.1,381.9"/>
<polyline points="448.3,900.3 438.6,900.9 426.8,899.8 417.9,896.8"/>
<polyline points="15.1,921.0 41.7,917.2 69.2,920.7 101.3,919.1"/>
<polyline points="140.2,170.9 154.9,178.0 163.2,179.0 173.1,181.5"/>
<polyline points="808.4,587.5 817.4,564.0 830.2,546.1 839.5,523.5"/>
<polyline points="808.4,587.5 825.6,572.8 847.5,561.7 871.9,550.3"/>
<polyline points="400.7,104.9 401.0,118.1 399.3,125.4 402.4,137.4"/>
<polyline points="107.0,407.7 120.6,410.9 131.8,408.8 142.3,415.0"/>
<polyline points="107.0,407.7 114.2,418.7 111.8,435.7 116.8,443.8"/>
<polyline points="871.9,550.3 876.5,539.5 882.1,522.5 892.2,513.2"/>
<polyline points="343.5,510.3 355.8,520.2 365.6,525.0 373.7,535.9"/>
<polyline points="141.1,688.4 155.4,679.3 166.3,674.7 183.5,672.4"/>
<polyline points="542.9,313.0 527.7,309.4 513.9,316.2 504.0,312.4"/>
<polyline points="122.7,781.4 112.2,796.0 97.0,802.3 80.0,814.9"/>
<polyline points="802.5,247.1 812.2,241.8 818.7,232.1 821.1,221.5"/>
<polyline points="637.0,349.2 626.0,342.8 617.5,330.3 605.3,321.1"/>
<polyline points="637.0,349.2 631.8,333.5 634.0,310.6 628.0,297.2"/>
<polyline points="196.6,483.3 206.9,481.8 214.3,473.4 229.1,470.6"/>
<polyline points="504.0,312.4 500.6,328.2 500.8,343.2 496.3,352.7"/>
<polyline points="550.3,369.6 550.7,386.3 547.4,399.4 545.6,412.1"/>
<polyline points="621.0,123.7 631.7,134.1 634.1,137.6 644.7,148.7"/>
<polyline points="621.0,123.7 615.4,141.4 612.9,155.3 612.2,167.1"/>
<polyline points="649.2,213.0 659.6,211.9 676.5,210.8 689.6,204.8"/>
<polyline points="649.2,213.0 652.8,226.1 660.6,242.0 662.1,258.6"/>
<polyline points="456.1,436.0 452.1,439.2 443.7,453.7 434.8,457.2"/>
<polyline points="456.1,436.0 467.3,431.2 473.6,430.5 487.5,423.7"/>
<polyline points="312.9,137.7 317.1,124.7 323.0,113.9 327.3,99.8"/>
<polyline points="574.7,150.4 581.6,162.1 584.3,179.3 584.5,188.2"/>
<polyline points="487.5,423.7 495.2,415.4 502.9,401.1 510.6,388.1"/>
<polyline points="54.9,672.9 42.5,657.1 34.7,641.7 25.4,623.9"/>
<polyline points="231.4,149.2 222.7,140.4 216.6,137.4 212.1,126.0"/>
<polyline points="123.8,541.4 126.8,526.6 131.0,518.1 135.7,507.0"/>
<polyline points="123.8,541.4 132.7,551.3 138.6,568.0 149.8,579.1"/>
<polyline points="300.5,508.7 286.2,502.3 275.5,496.7 263.4,487.6"/>
<polyline points="374.3,868.9 382.2,854.9 380.0,845.6 387.9,833.6"/>
<polyline points="918.5,237.4 930.2,232.9 943.2,226.9 954.9,215.8"/>
<polyline points="588.8,288.7 597.5,300.9 598.7,312.3 605.3,321.1"/>
<polyline points="588.8,288.7 601.9,292.6 618.3,297.5 628.0,297.2"/>
<polyline points="231.5,500.9 229.8,492.5 231.2,477.4 229.1,470.6"/>
<polyline points="145.4,352.0 131.6,351.0 113.2,349.9 95.4,345.6"/>
<polyline points="145.4,352.0 154.4,369.3 162.3,386.2 174.2,400.3"/>
<polyline points="145.4,352.0 132.9,337.3 125.1,313.0 118.3,298.0"/>
<polyline points="63.7,435.3 45.8,431.6 31.2,433.3 13.6,431.9"/>
<polyline points="354.8,272.9 365.2,281.2 375.5,286.7 383.2,291.2"/>
<polyline points="833.2,263.0 828.1,247.9 822.2,238.6 821.1,221.5"/>
<polyline points="875.8,109.1 885.0,114.6 892.3,121.8 902.9,128.6"/>
<polyline points="612.2,167.1 624.4,160.0 637.4,154.8 644.7,148.7"/>
<polyline points="165.0,648.1 170.3,657.8 180.0,664.3 183.5,672.4"/>
<polyline points="149.8,579.1 151.6,563.1 153.5,549.4 155.3,536.0"/>
<polyline points="478.9,635.5 468.2,618.5 458.3,605.6 446.4,596.2"/>
<polyline points="531.2,614.0 516.2,605.6 507.3,592.2 492.5,583.1"/>
<polyline points="498.2,197.3 491.6,182.6 483.6,172.0 471.5,157.8"/>
<polyline points="665.1,442.5 680.3,435.1 688.2,427.0 704.1,416.7"/>
<polyline points="901.2,302.1 917.7,315.6 928.2,327.4 941.6,341.2"/>
<polyline points="718.5,548.7 704.9,537.0 689.5,524.4 675.4,507.7"/>
<polyline points="581.6,570.8 563.9,569.7 544.9,571.4 527.4,566.4"/>
<polyline points="958.9,146.2 945.0,151.0 930.1,156.2 916.2,163.9"/>
<polyline points="821.7,179.2 833.8,188.7 848.0,193.8 857.0,204.0"/>
<polyline points="395.2,603.8 385.5,594.6 379.6,578.9 366.7,567.5"/>
<polyline points="395.2,603.8 388.7,617.0 375.0,631.1 364.6,641.5"/>
<polyline points="52.6,790.6 59.8,797.7 66.9,808.6 80.0,814.9"/>
<polyline points="768.8,447.7 775.8,429.1 775.6,418.1 782.5,400.4"/>
<polyline points="728.0,177.5 721.5,171.8 710.2,155.8 698.7,151.0"/>
<polyline points="510.6,388.1 503.8,378.2 498.1,363.5 496.3,352.7"/>
<polyline points="471.5,157.8 455.8,153.9 444.5,149.9 432.9,142.5"/>
<polyline points="892.2,513.2 906.2,508.4 916.6,503.9 925.8,496.4"/>
<polyline points="817.2,480.8 809.4,465.0 806.0,452.7 803.9,444.5"/>
<polyline points="405.3,543.5 397.8,537.3 388.1,535.2 373.7,535.9"/>
<polyline points="91.3,507.9 105.0,503.8 118.0,508.8 135.7,507.0"/>
<polyline points="520.8,112.2 506.1,112.4 492.9,111.3 472.9,115.8"/>
<polyline points="149.2,898.1 138.1,891.3 125.6,881.2 110.8,878.3"/>
<polyline points="149.2,898.1 167.0,893.4 180.8,891.8 193.7,886.3"/>
<polyline points="303.0,586.9 286.7,582.2 278.6,574.3 263.3,572.0"/>
<polyline points="303.0,586.9 313.5,597.6 330.6,601.3 346.1,610.1"/>
<polyline points="595.5,253.7 611.0,258.6 620.2,261.6 630.3,263.3"/>
<polyline points="409.1,357.6 408.7,375.5 416.4,385.6 415.5,400.7"/>
<polyline points="335.6,192.6 327.5,211.7 320.6,226.0 317.0,240.6"/>
</g>
<g fill="none" stroke="#f7d3c1" stroke-width="1" stroke-linejoin="round" stroke-linecap="round" opacity="0.9">
<polyline points="95.4,345.6 87.7,339.4 87.7,324.0 84.1,317.7"/>
<polyline points="95.4,345.6 87.3,349.0 69.5,349.9 61.8,349.9"/>
<polyline points="92.0,768.9 103.1,769.5 116.0,775.9 122.7,781.4"/>
<polyline points="670.7,127.0 660.4,137.6 651.0,142.6 644.7,148.7"/>
<polyline points="156.2,104.5 176.7,111.4 190.4,115.6 212.1,126.0"/>
<polyline points="444.0,324.5 431.8,318.3 421.2,315.2 412.4,307.7"/>
<polyline points="444.0,324.5 451.3,337.8 454.9,343.8 462.5,357.2"/>
<polyline points="282.5,150.7 274.2,158.0 265.8,167.0 254.1,173.1"/>
<polyline points="740.6,426.7 730.8,426.0 713.0,417.2 704.1,416.7"/>
<polyline points="946.1,424.2 934.6,428.8 925.1,434.1 912.5,443.7"/>
<polyline points="946.1,424.2 931.2,411.0 920.8,407.1 904.2,392.7"/>
<polyline points="75.1,618.2 81.5,633.8 87.2,642.0 88.0,657.4"/>
<polyline points="752.4,317.5 752.2,332.6 749.2,347.7 746.8,367.0"/>
<polyline points="102.0,142.1 90.7,134.9 87.8,125.3 76.7,118.3"/>
<polyline points="770.1,240.5 753.5,247.9 739.8,249.7 728.2,250.7"/>
<polyline points="541.9,466.0 541.9,476.0 547.8,488.4 546.6,497.3"/>
<polyline points="541.9,466.0 552.4,461.2 556.7,446.9 563.9,442.7"/>
<polyline points="188.1,703.9 185.9,696.9 185.8,685.4 183.5,672.4"/>
<polyline points="188.1,703.9 175.1,712.1 165.0,714.4 155.3,722.9"/>
<polyline points="130.7,630.1 139.1,624.4 148.2,618.3 158.1,611.7"/>
<polyline points="116.8,443.8 117.6,451.3 123.8,458.9 129.7,471.2"/>
<polyline points="101.3,919.1 106.4,903.9 110.7,887.9 110.8,878.3"/>
<polyline points="101.3,919.1 119.2,915.1 135.5,903.3 149.2,898.1"/>
<polyline points="101.3,919.1 83.4,908.1 65.4,904.4 42.1,896.8"/>
<polyline points="746.8,367.0 730.6,366.7 718.6,368.6 707.2,367.4"/>
<polyline points="361.8,470.9 361.0,457.7 366.7,451.9 365.7,437.6"/>
<polyline points="925.8,496.4 931.7,488.8 937.6,482.7 947.8,470.3"/>
<polyline points="244.5,250.7 224.1,251.5 199.0,257.7 182.2,262.5"/>
<polyline points="251.7,780.6 233.9,784.3 218.9,798.9 204.9,803.2"/>
<polyline points="71.0,282.9 66.0,270.8 63.0,264.7 53.4,255.4"/>
<polyline points="71.0,282.9 74.5,291.1 81.1,304.2 84.1,317.7"/>
<polyline points="20.9,317.0 28.8,305.7 32.2,304.7 42.7,293.2"/>
<polyline points="432.9,142.5 419.0,141.0 415.9,140.5 402.4,137.4"/>
<polyline points="554.3,202.0 568.2,198.1 570.9,190.1 584.5,188.2"/>
<polyline points="554.3,202.0 541.5,210.8 530.5,216.1 513.2,225.5"/>
<polyline points="352.7,836.8 363.5,846.0 369.7,858.4 374.3,868.9"/>
<polyline points="22.2,852.9 22.4,841.9 17.2,826.4 20.2,810.7"/>
<polyline points="342.8,664.8 346.7,658.6 356.6,645.6 364.6,641.5"/>
<polyline points="405.5,752.9 392.7,758.2 374.0,752.4 361.7,758.1"/>
<polyline points="405.5,752.9 409.6,769.8 421.3,781.6 427.9,796.3"/>
<polyline points="605.0,411.6 587.7,424.1 577.4,436.3 563.9,442.7"/>
<polyline points="466.7,284.5 467.5,271.0 465.9,256.2 461.1,241.4"/>
<polyline points="135.7,507.0 143.7,517.2 149.2,524.2 155.3,536.0"/>
<polyline points="605.7,504.9 607.2,517.2 610.5,522.6 617.9,534.8"/>
<polyline points="605.7,504.9 604.4,489.2 604.5,478.7 609.0,465.3"/>
<polyline points="605.7,504.9 622.8,495.0 638.2,484.1 654.6,472.3"/>
<polyline points="307.8,793.5 308.0,807.2 301.0,821.1 297.0,831.7"/>
<polyline points="76.7,118.3 65.4,130.5 55.2,133.7 42.9,142.8"/>
<polyline points="301.7,753.7 303.5,764.3 305.8,779.1 307.8,793.5"/>
<polyline points="441.6,112.7 428.8,108.7 418.0,108.3 400.7,104.9"/>
<polyline points="140.2,131.2 138.1,148.3 140.6,156.4 140.2,170.9"/>
<polyline points="609.0,465.3 623.7,469.1 637.5,472.8 654.6,472.3"/>
<polyline points="662.1,258.6 647.6,256.6 643.4,259.9 630.3,263.3"/>
<polyline points="461.1,241.4 478.4,238.8 492.0,228.1 513.2,225.5"/>
<polyline points="266.5,381.0 281.4,369.5 292.2,358.3 304.0,351.8"/>
<polyline points="129.7,471.2 136.7,472.9 150.1,478.1 158.5,486.4"/>
<polyline points="209.8,844.4 205.2,830.7 204.0,817.4 204.9,803.2"/>
<polyline points="781.8,145.6 772.0,145.8 758.0,149.3 749.5,155.6"/>
<polyline points="283.6,701.3 298.4,710.2 312.4,717.7 325.5,726.7"/>
<polyline points="934.7,530.3 922.9,522.8 902.5,521.9 892.2,513.2"/>
<polyline points="555.1,260.0 539.4,249.8 524.3,235.1 513.2,225.5"/>
<polyline points="519.5,512.7 531.8,524.4 543.6,532.4 551.1,546.1"/>
<polyline points="522.2,437.9 509.8,436.4 499.9,429.7 487.5,423.7"/>
<polyline points="462.5,357.2 472.4,354.6 482.3,353.4 496.3,352.7"/>
<polyline points="664.6,361.3 662.7,369.0 664.7,382.4 668.7,395.3"/>
<polyline points="346.1,610.1 349.2,616.8 358.6,633.1 364.6,641.5"/>
<polyline points="365.7,437.6 378.6,443.4 387.2,448.1 397.7,454.8"/>
<polyline points="871.6,356.1 882.3,366.6 895.6,380.7 904.2,392.7"/>
<polyline points="857.0,204.0 845.0,209.2 833.3,212.1 821.1,221.5"/>
<polyline points="763.3,197.3 765.5,211.8 767.2,223.6 770.1,240.5"/>
<polyline points="391.7,664.8 401.8,658.1 414.8,652.5 430.1,650.4"/>
<polyline points="186.4,151.0 178.5,163.0 179.5,172.2 173.1,181.5"/>
<polyline points="318.8,482.4 328.6,489.4 337.2,497.1 343.5,510.3"/>
<polyline points="945.9,111.1 952.5,124.8 957.3,136.8 958.9,146.2"/>
<polyline points="251.4,427.7 236.4,424.0 224.6,421.3 207.3,421.6"/>
<polyline points="53.4,255.4 46.4,268.5 46.4,279.0 42.7,293.2"/>
<polyline points="365.6,174.3 355.5,179.3 346.3,187.9 335.6,192.6"/>
<polyline points="933.5,566.8 911.8,559.5 893.4,552.9 871.9,550.3"/>
<polyline points="912.5,443.7 901.3,437.3 890.0,441.1 883.4,435.3"/>
<polyline points="155.3,722.9 152.8,712.5 146.4,697.3 141.1,688.4"/>
<polyline points="417.3,491.3 407.3,476.2 404.3,467.3 397.7,454.8"/>
<polyline points="698.8,483.5 683.4,476.4 669.0,479.8 654.6,472.3"/>
<polyline points="751.8,535.7 738.6,536.7 726.1,545.0 718.5,548.7"/>
<polyline points="114.3,838.3 115.1,850.4 109.4,864.3 110.8,878.3"/>
<polyline points="88.0,657.4 77.9,661.7 67.4,667.5 54.9,672.9"/>
<polyline points="76.4,192.1 87.4,179.4 90.0,156.5 102.0,142.1"/>
<polyline points="317.4,550.6 316.2,564.5 306.0,571.6 303.0,586.9"/>
<polyline points="317.4,550.6 309.8,537.2 304.7,519.9 300.5,508.7"/>
<polyline points="415.5,400.7 406.8,390.7 394.2,386.7 383.6,374.4"/>
<polyline points="192.2,563.3 185.8,549.8 182.6,534.7 182.3,520.0"/>
<polyline points="628.0,297.2 618.8,303.9 610.5,313.7 605.3,321.1"/>
<polyline points="383.6,374.4 388.2,367.6 397.6,366.2 409.1,357.6"/>
<polyline points="789.4,492.9 797.5,487.4 804.3,484.0 817.2,480.8"/>
<polyline points="789.4,492.9 778.8,495.7 760.5,490.0 746.2,493.9"/>
<polyline points="789.4,492.9 780.9,474.6 775.1,463.4 768.8,447.7"/>
<polyline points="839.5,523.5 852.3,529.1 864.4,541.7 871.9,550.3"/>
<polyline points="465.9,483.8 455.4,471.8 448.4,465.1 434.8,457.2"/>
<polyline points="15.1,921.0 13.7,898.6 22.7,873.8 22.2,852.9"/>
<polyline points="707.2,367.4 695.1,366.1 681.8,366.1 664.6,361.3"/>
<polyline points="107.0,407.7 92.5,417.9 77.3,424.3 63.7,435.3"/>
<polyline points="542.9,313.0 555.3,302.5 576.5,293.0 588.8,288.7"/>
<polyline points="802.5,247.1 812.1,253.0 826.4,258.3 833.2,263.0"/>
<polyline points="142.3,415.0 136.2,425.8 128.6,431.1 116.8,443.8"/>
<polyline points="550.3,369.6 534.3,372.0 525.5,384.5 510.6,388.1"/>
<polyline points="456.1,436.0 452.2,419.4 453.5,410.8 455.4,394.4"/>
<polyline points="397.7,454.8 412.0,454.5 424.5,457.7 434.8,457.2"/>
<polyline points="574.7,150.4 581.1,140.1 579.8,124.0 586.0,115.2"/>
<polyline points="123.8,541.4 138.0,541.9 147.7,537.8 155.3,536.0"/>
<polyline points="300.5,508.7 315.8,509.3 326.1,511.6 343.5,510.3"/>
<polyline points="270.8,627.0 281.0,612.6 294.2,600.7 303.0,586.9"/>
<polyline points="374.3,868.9 391.4,879.1 403.5,885.8 417.9,896.8"/>
<polyline points="588.8,288.7 591.7,276.4 596.5,268.0 595.5,253.7"/>
<polyline points="551.1,546.1 562.5,551.7 569.9,560.6 581.6,570.8"/>
<polyline points="855.9,478.7 839.9,476.1 829.7,481.5 817.2,480.8"/>
<polyline points="382.2,796.8 382.4,809.0 385.7,825.1 387.9,833.6"/>
<polyline points="691.6,316.6 683.9,310.3 677.1,298.6 674.5,287.3"/>
<polyline points="904.2,392.7 913.1,389.0 924.3,380.8 935.1,370.8"/>
<polyline points="904.2,392.7 895.1,410.8 889.3,417.4 883.4,435.3"/>
<polyline points="304.8,446.5 310.1,459.1 316.0,470.0 318.8,482.4"/>
<polyline points="304.8,446.5 283.9,438.7 268.5,433.3 251.4,427.7"/>
<polyline points="146.3,263.2 139.7,255.2 127.6,251.2 117.7,243.9"/>
<polyline points="941.6,341.2 939.7,352.9 940.1,364.5 935.1,370.8"/>
<polyline points="165.0,648.1 164.8,635.3 162.1,623.9 158.1,611.7"/>
<polyline points="149.8,579.1 155.3,593.1 153.2,603.0 158.1,611.7"/>
<polyline points="57.4,506.3 70.8,508.1 78.3,505.0 91.3,507.9"/>
<polyline points="531.2,614.0 529.0,602.0 527.2,578.4 527.4,566.4"/>
<polyline points="665.1,442.5 665.1,448.6 656.7,460.9 654.6,472.3"/>
<polyline points="106.6,211.5 108.7,220.7 117.8,234.2 117.7,243.9"/>
<polyline points="20.2,810.7 32.8,802.4 45.1,793.6 52.6,790.6"/>
<polyline points="821.7,179.2 819.6,194.4 820.2,207.4 821.1,221.5"/>
<polyline points="13.6,431.9 22.4,444.8 25.7,467.2 33.9,479.8"/>
<polyline points="19.4,735.9 27.5,755.4 41.3,772.2 52.6,790.6"/>
<polyline points="446.4,596.2 460.2,593.1 476.6,589.7 492.5,583.1"/>
<polyline points="402.4,245.2 399.3,264.2 392.5,277.3 383.2,291.2"/>
<polyline points="335.6,192.6 349.1,203.1 357.5,217.8 365.5,232.2"/>
</g>
<g fill="none" stroke="#f2e6b4" stroke-width="1" stroke-linejoin="round" stroke-linecap="round" opacity="1">
<polyline points="11.0,130.0 40.0,150.0 80.0,170.0 110.0,200.0 120.0,240.0 100.0,280.0"/>
<polyline points="140.0,245.0 150.0,210.0 144.0,185.0"/>
<polyline points="140.0,245.0 135.0,290.0 110.0,330.0 74.0,322.0"/>
<polyline points="190.0,258.0 200.0,300.0 180.0,340.0 190.0,380.0 218.0,402.0"/>
<polyline points="240.0,262.0 230.0,300.0 256.0,346.0"/>
<polyline points="285.0,224.0 330.0,215.0 370.0,210.0 400.0,230.0 427.0,263.0"/>
<polyline points="370.0,250.0 380.0,290.0 360.0,330.0 398.0,390.0"/>
<polyline points="285.0,284.0 330.0,300.0 380.0,290.0"/>
<polyline points="160.0,410.0 183.0,456.0 188.0,500.0 188.0,557.0"/>
<polyline points="141.0,477.0 120.0,500.0 100.0,530.0"/>
<polyline points="85.0,465.0 110.0,480.0 141.0,477.0"/>
<polyline points="290.0,490.0 300.0,440.0 330.0,395.0"/>
<polyline points="183.0,456.0 235.0,480.0"/>
<polyline points="150.0,550.0 160.0,580.0"/>
<polyline points="275.0,547.0 290.0,575.0 300.0,603.0"/>
<polyline points="11.0,620.0 40.0,640.0 84.0,632.0"/>
<polyline points="11.0,780.0 40.0,800.0 75.0,770.0"/>
<polyline points="100.0,850.0 140.0,830.0 160.0,790.0"/>
<polyline points="430.0,180.0 440.0,220.0 444.0,261.0"/>
<polyline points="360.0,110.0 400.0,130.0 440.0,120.0 487.0,138.0"/>
<polyline points="447.0,343.0 470.0,330.0 487.0,335.0"/>
<polyline points="730.0,250.0 700.0,220.0 720.0,180.0 761.0,168.0"/>
<polyline points="790.0,240.0 800.0,192.0"/>
<polyline points="870.0,300.0 877.0,322.0 868.0,364.0"/>
<polyline points="915.0,343.0 940.0,320.0 961.0,310.0"/>
<polyline points="885.0,416.0 900.0,440.0 903.0,471.0"/>
<polyline points="866.0,447.0 862.0,496.0 860.0,524.0"/>
<polyline points="930.0,405.0 935.0,450.0 935.0,490.0"/>
<polyline points="880.0,185.0 890.0,150.0 870.0,117.0"/>
<polyline points="906.0,248.0 940.0,230.0 961.0,225.0"/>
</g>
<g fill="none" stroke="#f6c7ae" stroke-width="1.2" stroke-linejoin="round" stroke-linecap="round" opacity="1">
<polyline points="388.0,868.0 392.0,890.0 398.0,921.0"/>
<polyline points="47.5,227.5 90.0,240.0 140.0,245.0 190.0,258.0 240.0,262.0 285.0,270.0 313.0,258.0"/>
<polyline points="47.5,227.5 85.0,200.0 120.0,178.0 160.0,170.0 193.0,172.0"/>
<polyline points="193.0,172.0 215.0,178.0 245.0,188.0 270.0,215.0 300.0,240.0 313.0,252.0"/>
<polyline points="26.0,372.0 50.0,345.0 74.0,322.0 60.0,283.0"/>
<polyline points="26.0,372.0 60.0,395.0 110.0,410.0 160.0,410.0 190.0,405.0 218.0,402.0"/>
<polyline points="218.0,402.0 230.0,440.0 235.0,480.0 243.0,508.0"/>
<polyline points="243.0,508.0 255.0,530.0 275.0,547.0 320.0,550.0 347.0,553.0"/>
<polyline points="48.5,509.0 90.0,495.0 141.0,477.0 190.0,490.0 243.0,508.0"/>
<polyline points="48.5,509.0 100.0,530.0 150.0,550.0 188.0,557.0 215.0,530.0 243.0,508.0"/>
<polyline points="218.0,402.0 270.0,400.0 330.0,395.0 398.0,390.0 430.0,360.0 447.0,343.0"/>
<polyline points="243.0,508.0 290.0,490.0 340.0,470.0 398.0,440.0 398.0,390.0"/>
<polyline points="313.0,258.0 325.0,230.0 331.0,200.0 345.0,160.0 360.0,110.0"/>
<polyline points="331.0,200.0 380.0,190.0 430.0,180.0 470.0,175.0"/>
<polyline points="48.5,509.0 60.0,560.0 70.0,600.0 84.0,632.0 93.0,670.0 88.0,721.0"/>
<polyline points="88.0,721.0 75.0,770.0 85.0,820.0 100.0,850.0 75.0,870.0"/>
<polyline points="88.0,721.0 50.0,715.0 11.0,712.0"/>
<polyline points="93.0,670.0 120.0,640.0"/>
<polyline points="75.0,870.0 110.0,880.0 150.0,885.0 168.0,893.0 200.0,905.0"/>
<polyline points="11.0,300.0 45.0,290.0 61.0,284.0"/>
<polyline points="11.0,180.0 40.0,160.0 60.0,150.0"/>
<polyline points="114.0,150.0 130.0,120.0 129.0,98.0"/>
<polyline points="245.0,188.0 260.0,140.0 280.0,98.0"/>
<polyline points="193.0,172.0 185.0,130.0 200.0,98.0"/>
<polyline points="710.0,290.0 730.0,250.0 748.0,251.0 790.0,240.0 833.0,250.0"/>
<polyline points="748.0,251.0 760.0,210.0 761.0,168.0"/>
<polyline points="761.0,168.0 790.0,140.0 810.0,129.0"/>
<polyline points="833.0,297.0 870.0,300.0 906.0,290.0 930.0,270.0 961.0,255.0"/>
<polyline points="906.0,248.0 900.0,290.0 915.0,343.0 921.0,358.0"/>
<polyline points="852.0,348.0 880.0,355.0 921.0,358.0 961.0,350.0"/>
<polyline points="858.0,392.0 890.0,380.0 921.0,358.0"/>
<polyline points="858.0,392.0 900.0,400.0 930.0,405.0 961.0,410.0"/>
<polyline points="858.0,392.0 845.0,420.0 830.0,440.0 820.0,485.0"/>
<polyline points="820.0,485.0 840.0,470.0 866.0,447.0 885.0,416.0"/>
<polyline points="820.0,485.0 800.0,500.0 760.0,505.0 720.0,517.0"/>
<polyline points="905.0,537.0 910.0,514.0 930.0,500.0 961.0,495.0"/>
<polyline points="840.0,98.0 830.0,130.0 810.0,129.0"/>
<polyline points="870.0,117.0 900.0,125.0 930.0,126.0 961.0,130.0"/>
<polyline points="848.0,189.0 880.0,185.0 920.0,200.0 961.0,195.0"/>
</g>
<g fill="none" stroke="#c4bccb" stroke-width="1.6" stroke-linejoin="round" stroke-linecap="round" opacity="1">
<polyline points="11.0,800.0 30.0,820.0 45.0,845.0 70.0,840.0 95.0,850.0 110.0,870.0 100.0,895.0 80.0,900.0 60.0,893.0 45.0,880.0 30.0,860.0"/>
<polyline points="110.0,870.0 140.0,875.0 165.0,885.0 175.0,895.0 185.0,905.0 230.0,915.0 260.0,910.0 300.0,915.0 330.0,921.0"/>
<polyline points="330.0,921.0 370.0,900.0 400.0,890.0 430.0,885.0 462.0,895.0"/>
</g>
<g fill="none" stroke="#f3a9c8" stroke-width="1.5" stroke-linejoin="round" stroke-linecap="round" opacity="1">
<polyline points="61.3,98.5 58.4,132.8 64.1,164.1 62.7,204.0 67.0,249.6 61.3,283.8 51.3,318.0 42.8,360.0 28.5,374.0 37.0,417.0 45.6,459.8 48.5,496.8"/>
<polyline points="82.7,144.2 114.0,149.9 145.4,157.0 171.0,172.7 193.8,181.2 233.8,184.0 256.6,201.2 285.0,224.0 313.6,252.5"/>
<polyline points="313.6,258.2 342.0,245.4 370.6,249.6 399.0,258.2 427.6,263.9 444.7,261.0 456.0,238.2 480.0,212.6"/>
<polyline points="313.6,261.0 285.0,283.8 273.7,318.0 256.5,346.5 242.3,360.0 225.0,383.0 218.0,401.3"/>
<polyline points="216.6,402.8 188.0,408.5 159.6,421.3 136.8,434.0 114.0,454.0 85.5,465.5 57.0,494.0"/>
<polyline points="54.0,514.0 74.0,542.4 97.0,565.0 119.7,582.0 134.0,591.0"/>
<polyline points="42.8,519.6 28.5,545.0 11.4,559.5"/>
<polyline points="487.5,138.0 482.5,173.0 470.0,210.5 452.5,248.0 444.7,261.0 436.0,289.5 439.0,318.0 447.0,340.0 457.5,372.5 482.5,400.0 497.5,417.5"/>
<polyline points="870.5,98.0 866.0,110.0 862.0,150.0 857.6,196.0 849.0,208.0 841.0,231.0 833.0,263.0 833.0,297.0 848.6,326.0 852.0,348.0 868.0,372.0 872.0,395.0 880.0,420.0 884.0,440.0"/>
<polyline points="884.0,440.0 900.0,470.0 930.0,480.0 961.0,470.0"/>
<polyline points="811.7,485.0 823.2,492.9 843.3,500.8 860.4,500.1"/>
<polyline points="843.3,500.8 847.5,511.5 861.9,527.3 880.5,548.7 890.5,564.5 902.0,570.2 916.3,577.4 933.5,580.3 961.0,581.7"/>
<polyline points="927.8,480.0 930.6,494.3 919.2,501.5 933.5,502.9 947.8,512.9 961.0,525.8"/>
</g>
<g fill="#707070" stroke="#fff" stroke-width="1.8" stroke-opacity=".75" style="paint-order:stroke" opacity=".88">
<text transform="translate(119.0,117.2) scale(0.86,1)" font-size="9" xml:space="preserve">Gramat</text>
<text transform="translate(37.0,131.7) scale(0.86,1)" font-size="9" xml:space="preserve">Gourdon</text>
<text transform="translate(193.8,175.2) scale(0.86,1)" font-size="9" xml:space="preserve">Figeac</text>
<text transform="translate(144.0,188.2) scale(0.86,1)" font-size="9" xml:space="preserve">Capdenac-Gare</text>
<text transform="translate(245.7,190.7) scale(0.86,1)" font-size="9" xml:space="preserve">Decazeville</text>
<text transform="translate(245.7,204.2) scale(0.86,1)" font-size="9" xml:space="preserve">Aubin</text>
<text transform="translate(331.5,203.8) scale(0.86,1)" font-size="9" xml:space="preserve">Espalion</text>
<text transform="translate(50.0,231.1) scale(0.9,1)" font-size="12" fill="#5a5a5a" xml:space="preserve">Cahors</text>
<text transform="translate(193.8,262.8) scale(0.86,1)" font-size="9" xml:space="preserve">Villefranche-de-Rouergue</text>
<text transform="translate(321.5,263.9) scale(0.9,1)" font-size="12" fill="#5a5a5a" xml:space="preserve">Rodez</text>
<text transform="translate(250.3,275.6) scale(0.86,1)" font-size="9" xml:space="preserve">Luc-la-Primaube</text>
<text transform="translate(444.7,271.2) scale(0.86,1)" font-size="9" xml:space="preserve">Sévérac d'Aveyron</text>
<text transform="translate(74.7,325.5) scale(0.86,1)" font-size="9" xml:space="preserve">Caussade</text>
<text transform="translate(447.0,345.8) scale(0.86,1)" font-size="9" xml:space="preserve">Millau</text>
<text transform="translate(71.3,354.9) scale(0.86,1)" font-size="9" xml:space="preserve">Nègrepelisse</text>
<text transform="translate(223.8,363.7) scale(0.86,1)" font-size="9" xml:space="preserve">Carmaux</text>
<text transform="translate(28.5,375.1) scale(0.9,1)" font-size="12" fill="#5a5a5a" xml:space="preserve">Montauban</text>
<text transform="translate(-1.0,394.0) scale(0.86,1)" font-size="9" xml:space="preserve">Montech</text>
<text transform="translate(34.8,406.8) scale(0.86,1)" font-size="9" xml:space="preserve">Labastide-Saint-Pierre</text>
<text transform="translate(152.5,394.6) scale(0.86,1)" font-size="9" xml:space="preserve">Lescure-d'Albigeois</text>
<text transform="translate(221.0,405.6) scale(0.9,1)" font-size="12" fill="#5a5a5a" xml:space="preserve">Albi</text>
<text transform="translate(162.0,412.5) scale(0.86,1)" font-size="9" xml:space="preserve">Gaillac</text>
<text transform="translate(66.0,423.9) scale(0.86,1)" font-size="9" xml:space="preserve">Villemur-sur-Tarn</text>
<text transform="translate(141.0,429.2) scale(0.86,1)" font-size="9" xml:space="preserve">Lisle-sur-Tarn</text>
<text transform="translate(0.0,433.2) scale(0.86,1)" font-size="9" xml:space="preserve">Fronton</text>
<text transform="translate(76.4,439.0) scale(0.86,1)" font-size="9" xml:space="preserve">Rabastens</text>
<text transform="translate(24.2,455.0) scale(0.86,1)" font-size="9" xml:space="preserve">Saint-Sulpice-la-Pointe</text>
<text transform="translate(183.9,459.0) scale(0.86,1)" font-size="9" xml:space="preserve">Graulhet</text>
<text transform="translate(14.8,472.4) scale(0.86,1)" font-size="9" xml:space="preserve">Merville</text>
<text transform="translate(44.8,471.0) scale(0.86,1)" font-size="9" xml:space="preserve">Bruguières</text>
<text transform="translate(141.0,480.1) scale(0.86,1)" font-size="9" xml:space="preserve">Lavaur</text>
<text transform="translate(22.8,491.5) scale(0.86,1)" font-size="9" xml:space="preserve">Saint-Jean</text>
<text transform="translate(62.7,493.8) scale(0.86,1)" font-size="9" xml:space="preserve">L'Union</text>
<text transform="translate(52.0,512.5) scale(0.9,1)" font-size="12" fill="#5a5a5a" xml:space="preserve">Toulouse</text>
<text transform="translate(244.6,510.6) scale(0.86,1)" font-size="9" xml:space="preserve">Castres</text>
<text transform="translate(15.7,527.1) scale(0.86,1)" font-size="9" xml:space="preserve">Plaisance-du-Touch</text>
<text transform="translate(65.0,540.8) scale(0.86,1)" font-size="9" xml:space="preserve">Castanet-Tolosan</text>
<text transform="translate(249.7,533.1) scale(0.86,1)" font-size="9" xml:space="preserve">Labruguière</text>
<text transform="translate(20.0,544.5) scale(0.86,1)" font-size="9" xml:space="preserve">Seysses</text>
<text transform="translate(234.3,547.1) scale(0.86,1)" font-size="9" xml:space="preserve">Aussillon</text>
<text transform="translate(276.0,549.9) scale(0.86,1)" font-size="9" xml:space="preserve">Mazamet</text>
<text transform="translate(24.2,559.0) scale(0.86,1)" font-size="9" xml:space="preserve">Muret</text>
<text transform="translate(188.0,559.9) scale(0.86,1)" font-size="9" xml:space="preserve">Revel</text>
<text transform="translate(31.4,573.6) scale(0.86,1)" font-size="9" xml:space="preserve">Eaunes</text>
<text transform="translate(116.3,579.8) scale(0.86,1)" font-size="9" xml:space="preserve">Villefranche-de-Lauragais</text>
<text transform="translate(59.9,596.1) scale(0.86,1)" font-size="9" xml:space="preserve">Auterive</text>
<text transform="translate(95.5,595.0) scale(0.86,1)" font-size="9" xml:space="preserve">Nailloux</text>
<text transform="translate(-10.0,614.1) scale(0.86,1)" font-size="9" xml:space="preserve">Carbonne</text>
<text transform="translate(398.2,393.2) scale(0.86,1)" font-size="9" xml:space="preserve">Saint-Affrique</text>
<text transform="translate(84.0,634.7) scale(0.86,1)" font-size="9" xml:space="preserve">Saverdun</text>
<text transform="translate(93.8,673.7) scale(0.86,1)" font-size="9" xml:space="preserve">Pamiers</text>
<text transform="translate(-32.0,715.5) scale(0.86,1)" font-size="9" xml:space="preserve">Saint-Girons</text>
<text transform="translate(90.6,724.3) scale(0.9,1)" font-size="12" fill="#5a5a5a" xml:space="preserve">Foix</text>
<text transform="translate(451.0,674.5) scale(0.86,1)" font-size="9" xml:space="preserve">Gruissan</text>
<text transform="translate(423.0,702.7) scale(0.86,1)" font-size="9" xml:space="preserve">Sigean</text>
<text transform="translate(433.6,740.5) scale(0.86,1)" font-size="9" xml:space="preserve">Leucate</text>
<text transform="translate(436.7,780.4) scale(0.86,1)" font-size="9" xml:space="preserve">Le Barcarès</text>
<text transform="translate(398.0,811.6) scale(0.9,1)" font-size="12" fill="#5a5a5a" xml:space="preserve">Perpignan</text>
<text transform="translate(427.0,835.9) scale(0.86,1)" font-size="9" xml:space="preserve">Saint-Cyprien</text>
<text transform="translate(430.0,860.9) scale(0.86,1)" font-size="9" xml:space="preserve">Argelès-sur-Mer</text>
<text transform="translate(457.0,880.8) scale(0.86,1)" font-size="9" xml:space="preserve">Banyuls-sur-Mer</text>
<text transform="translate(466.8,918.7) scale(0.86,1)" font-size="9" xml:space="preserve">Llançà</text>
<text transform="translate(16.4,860.1) scale(0.86,1)" font-size="9" xml:space="preserve">La  Massana</text>
<text transform="translate(59.4,863.1) scale(0.9,1)" font-size="12" fill="#8a8a8a" xml:space="preserve">Andorre</text>
<text transform="translate(75.0,874.1) scale(0.86,1)" font-size="9" xml:space="preserve">Escaldes-Engordany</text>
<text transform="translate(64.5,887.4) scale(0.86,1)" font-size="9" xml:space="preserve">Sant  Julià  de  Lòria</text>
<text transform="translate(57.8,921.0) scale(0.86,1)" font-size="9" xml:space="preserve">La  Seu  d'Urgell</text>
<text transform="translate(168.0,896.0) scale(0.86,1)" font-size="9" xml:space="preserve">Puigcerdà</text>
<text transform="translate(769.0,487.8) scale(0.86,1)" font-size="9" xml:space="preserve">Saint-Gilles</text>
<text transform="translate(820.0,487.8) scale(0.86,1)" font-size="9" xml:space="preserve">Arles</text>
<text transform="translate(935.8,493.8) scale(0.86,1)" font-size="9" xml:space="preserve">Lambesc</text>
<text transform="translate(862.0,499.7) scale(0.86,1)" font-size="9" xml:space="preserve">Saint-Martin-de-Crau</text>
<text transform="translate(910.5,517.6) scale(0.86,1)" font-size="9" xml:space="preserve">Miramas</text>
<text transform="translate(710.0,521.2) scale(0.86,1)" font-size="9" xml:space="preserve">Aigues-Mortes</text>
<text transform="translate(860.9,527.5) scale(0.86,1)" font-size="9" xml:space="preserve">Saint-Chamas</text>
<text transform="translate(701.5,534.9) scale(0.86,1)" font-size="9" xml:space="preserve">Le  Grau-du-Roi</text>
<text transform="translate(905.0,540.6) scale(0.86,1)" font-size="9" xml:space="preserve">Istres</text>
<text transform="translate(951.7,537.7) scale(0.86,1)" font-size="9" xml:space="preserve">Aix-en-Provence</text>
<text transform="translate(928.5,551.8) scale(0.86,1)" font-size="9" xml:space="preserve">Rognac</text>
<text transform="translate(895.7,567.0) scale(0.86,1)" font-size="9" xml:space="preserve">Fos-sur-Mer</text>
<text transform="translate(859.8,582.9) scale(0.86,1)" font-size="9" xml:space="preserve">Port-Saint-Louis-du-Rhône</text>
<text transform="translate(870.4,601.4) scale(0.86,1)" font-size="9" xml:space="preserve">Sausset-les-Pins</text>
<text transform="translate(606.0,564.9) scale(0.86,1)" font-size="9" xml:space="preserve">Frontignan</text>
<text transform="translate(594.8,579.9) scale(0.86,1)" font-size="9" xml:space="preserve">Sète</text>
<text transform="translate(556.0,594.2) scale(0.86,1)" font-size="9" xml:space="preserve">Marseillan</text>
<text transform="translate(821.5,444.0) scale(0.86,1)" font-size="9" xml:space="preserve">Beaucaire</text>
<text transform="translate(866.0,450.0) scale(0.86,1)" font-size="9" xml:space="preserve">Saint-Rémy-de-Provence</text>
<text transform="translate(870.0,433.2) scale(0.86,1)" font-size="9" xml:space="preserve">Eyragues</text>
<text transform="translate(790.0,461.2) scale(0.86,1)" font-size="9" xml:space="preserve">Bellegarde</text>
<text transform="translate(837.5,470.2) scale(0.86,1)" font-size="9" xml:space="preserve">Fontvieille</text>
<text transform="translate(903.0,474.2) scale(0.86,1)" font-size="9" xml:space="preserve">La Roque-d'Anthéron</text>
<text transform="translate(777.5,109.5) scale(0.86,1)" font-size="9" xml:space="preserve">La Voulte-sur-Rhône</text>
<text transform="translate(492.5,108.2) scale(0.86,1)" font-size="9" xml:space="preserve">Saint-Chély-d'Apcher</text>
<text transform="translate(748.0,254.5) scale(0.86,1)" font-size="9" xml:space="preserve">Bourg-Saint-Andéol</text>
<text transform="translate(810.0,133.6) scale(0.9,1)" font-size="12" fill="#5a5a5a" xml:space="preserve">Privas</text>
<text transform="translate(870.0,120.0) scale(0.86,1)" font-size="9" xml:space="preserve">Livron-sur-Drôme</text>
<text transform="translate(914.0,135.0) scale(0.86,1)" font-size="9" xml:space="preserve">Crest</text>
<text transform="translate(761.0,171.2) scale(0.86,1)" font-size="9" xml:space="preserve">Aubenas</text>
<text transform="translate(800.0,195.0) scale(0.86,1)" font-size="9" xml:space="preserve">Le  Teil</text>
<text transform="translate(848.8,192.5) scale(0.86,1)" font-size="9" xml:space="preserve">Montélimar</text>
<text transform="translate(834.0,217.5) scale(0.86,1)" font-size="9" xml:space="preserve">Viviers</text>
<text transform="translate(840.0,230.9) scale(0.86,1)" font-size="9" xml:space="preserve">Donzère</text>
<text transform="translate(836.0,253.2) scale(0.86,1)" font-size="9" xml:space="preserve">Pierrelatte</text>
<text transform="translate(906.0,250.8) scale(0.86,1)" font-size="9" xml:space="preserve">Valréas</text>
<text transform="translate(943.4,258.8) scale(0.86,1)" font-size="9" xml:space="preserve">Nyons</text>
<text transform="translate(834.5,275.2) scale(0.86,1)" font-size="9" xml:space="preserve">Lapalud</text>
<text transform="translate(823.6,293.8) scale(0.86,1)" font-size="9" xml:space="preserve">Pont-Saint-Esprit</text>
<text transform="translate(925.0,297.7) scale(0.86,1)" font-size="9" xml:space="preserve">Vaison-la-Romaine</text>
<text transform="translate(814.0,325.6) scale(0.86,1)" font-size="9" xml:space="preserve">Bagnols-sur-Cèze</text>
<text transform="translate(877.3,325.6) scale(0.86,1)" font-size="9" xml:space="preserve">Camaret-sur-Aigues</text>
<text transform="translate(837.0,340.7) scale(0.86,1)" font-size="9" xml:space="preserve">Jonquières</text>
<text transform="translate(915.4,346.8) scale(0.86,1)" font-size="9" xml:space="preserve">Aubignan</text>
<text transform="translate(921.0,361.2) scale(0.86,1)" font-size="9" xml:space="preserve">Carpentras</text>
<text transform="translate(868.0,367.7) scale(0.86,1)" font-size="9" xml:space="preserve">Monteux</text>
<text transform="translate(920.8,380.2) scale(0.86,1)" font-size="9" xml:space="preserve">Pernes-les-Fontaines</text>
<text transform="translate(860.3,396.0) scale(0.9,1)" font-size="12" fill="#5a5a5a" xml:space="preserve">Avignon</text>
<text transform="translate(920.8,407.1) scale(0.86,1)" font-size="9" xml:space="preserve">L'Isle-sur-la-Sorgue</text>
<text transform="translate(815.0,418.7) scale(0.86,1)" font-size="9" xml:space="preserve">Châteaurenard</text>
<text transform="translate(885.0,419.2) scale(0.86,1)" font-size="9" xml:space="preserve">Noves</text>
</g>
<g fill="#666"><circle cx="47.5" cy="227.5" r="1.2"/><circle cx="319.5" cy="260.0" r="1.2"/><circle cx="26.0" cy="372.0" r="1.2"/><circle cx="218.0" cy="402.5" r="1.2"/><circle cx="48.5" cy="509.0" r="1.2"/><circle cx="87.5" cy="721.0" r="1.2"/><circle cx="858.0" cy="392.5" r="1.2"/></g>
<rect x="67" y="870" width="3.5" height="3.5" fill="#7a0d0d"/>
<polygon points="489.5,108.5 625.5,133.0 693.8,274.2 710.5,290.5 746.2,274.2 799.2,281.0 819.5,290.5 833.0,312.2 839.6,334.4 845.2,353.2 854.0,369.9 856.0,389.5 835.5,416.5 811.9,478.6 766.2,485.0 733.8,497.5 720.0,511.3 694.6,510.3 662.9,518.7 651.3,508.2 650.2,497.6 640.7,491.3 636.5,485.0 633.4,491.3 621.0,496.0 617.5,491.3 616.4,498.6 605.9,499.7 599.6,505.0 589.0,511.3 576.3,511.3 565.8,493.4 558.4,486.0 570.4,462.7 555.2,452.2 546.7,450.0 537.2,440.6 513.0,465.9 485.5,452.2 485.0,469.0 459.0,470.6 454.9,469.1 442.2,471.2 446.2,458.8 450.0,443.2 498.8,423.0 487.5,335.0 475.0,232.2 483.8,205.0 493.0,191.2" fill="#ffb347" stroke="#fff" stroke-width="1"/>
<polygon points="123.8,602.5 144.5,580.0 156.2,583.8 182.5,580.0 221.2,590.0 235.0,590.0 242.5,587.0 257.0,570.0 269.2,587.5 292.5,605.0 307.5,601.8 317.5,606.2 335.0,604.5 340.5,605.8 353.0,553.0 347.5,527.5 351.2,510.5 401.8,525.8 424.2,518.0 431.2,503.8 429.5,506.0 431.6,529.3 446.4,535.6 434.8,552.5 446.4,565.2 435.8,575.8 447.5,587.4 454.9,586.3 465.4,601.0 475.0,606.4 496.0,611.7 501.3,621.2 490.0,630.0 467.5,651.2 443.8,673.8 435.0,705.0 433.8,721.0 430.0,731.0 431.0,756.0 430.5,807.5 430.0,830.0 432.5,851.2 446.0,870.0 461.2,892.5 445.0,872.0 427.5,857.5 407.5,865.0 328.0,909.5 297.0,905.0 177.0,900.0 192.5,872.0 140.0,700.0 120.5,643.8 126.0,628.8 130.0,612.5" fill="#8dc25a" stroke="#fff" stroke-width="1"/>
<polygon points="442.2,471.2 454.9,469.1 459.0,470.6 485.0,469.0 485.5,452.2 513.0,465.9 537.2,440.6 546.7,450.0 555.2,452.2 570.4,462.7 558.4,486.0 565.8,493.4 576.3,511.3 589.0,511.3 599.6,505.0 605.9,499.7 616.4,498.6 617.5,491.3 621.0,496.0 633.4,491.3 636.5,485.0 640.7,491.3 650.2,497.6 651.3,508.2 662.9,518.7 694.6,510.3 720.0,511.3 711.5,520.8 696.7,529.3 695.7,539.8 654.5,531.0 647.0,534.6 630.2,533.0 622.8,544.0 614.3,562.0 603.8,562.0 595.3,569.4 586.9,579.0 567.9,592.7 555.2,605.3 546.7,613.8 538.3,618.0 510.8,618.0 501.3,621.2 496.0,611.7 475.0,606.4 465.4,601.0 454.9,586.3 447.5,587.4 435.8,575.8 446.4,565.2 434.8,552.5 446.4,535.6 431.6,529.3 429.5,506.0" fill="#fd5762" stroke="#fff" stroke-width="1"/>
<polygon points="653.4,479.6 657.6,476.5 666.0,482.8 660.8,489.0 653.4,486.0" fill="#fd5762" stroke="#fff" stroke-width="1"/>
<polyline points="834.8,321.0 817.5,318.4 819.7,325.5 814.0,336.6 815.2,348.8 808.6,349.9 805.3,344.3 799.7,346.6 793.0,366.5 782.0,375.4 765.3,388.7 764.2,394.3 752.0,403.0 748.7,410.9 735.4,416.4 722.0,420.9 718.7,428.6 719.9,440.8 713.2,443.0 713.2,447.5 719.9,455.3 694.3,469.7 690.0,462.0 664.4,462.0 657.6,476.5" fill="none" stroke="#fff" stroke-width="1.2" stroke-linejoin="round"/>
<polyline points="126.0,628.8 141.0,611.0 153.8,615.0 160.0,631.2 166.0,632.5 177.5,622.5 186.0,628.8 198.8,627.5 215.0,620.5 217.5,632.5 223.8,636.2 225.0,655.0 242.5,666.2 248.8,678.8 262.5,671.2 280.0,676.2 281.2,685.0 291.2,694.5 320.0,692.5 320.0,677.5 307.5,670.0 313.8,658.0 323.8,658.0 326.2,663.8 343.8,677.5 347.5,687.5 360.0,696.2 372.5,693.8 387.5,713.8 396.0,715.5 401.0,725.8 423.8,724.5 433.8,720.0" fill="none" stroke="#fff" stroke-width="1.2" stroke-linejoin="round"/>
<polyline points="558.4,486.0 551.0,486.0 547.8,491.3 551.0,497.6 546.7,504.0 555.2,514.5 553.0,519.8 561.5,531.4 553.0,547.2 555.2,573.6 560.5,581.0 544.6,599.0 548.9,602.2 555.2,605.3" fill="none" stroke="#fff" stroke-width="1.2" stroke-linejoin="round"/>
<g fill="#a8a822" stroke="#fff" stroke-opacity=".62" stroke-width="1.2">
<circle cx="618.3" cy="448.1" r="1.7"/><circle cx="459.6" cy="461.3" r="1.7"/><circle cx="684.3" cy="370.1" r="1.7"/><circle cx="503.8" cy="307.9" r="1.7"/><circle cx="639.1" cy="380.6" r="1.7"/><circle cx="602.0" cy="382.5" r="1.7"/><circle cx="657.4" cy="252.6" r="1.7"/><circle cx="755.1" cy="303.4" r="1.7"/><circle cx="541.0" cy="348.4" r="1.7"/><circle cx="624.9" cy="181.0" r="1.7"/><circle cx="655.1" cy="392.5" r="1.7"/><circle cx="621.2" cy="319.0" r="1.7"/><circle cx="679.6" cy="395.7" r="1.7"/><circle cx="706.5" cy="437.7" r="1.7"/><circle cx="561.8" cy="312.5" r="1.7"/><circle cx="747.9" cy="333.7" r="1.7"/><circle cx="647.9" cy="451.4" r="1.7"/><circle cx="524.4" cy="314.5" r="1.7"/><circle cx="726.8" cy="392.7" r="1.7"/><circle cx="725.9" cy="308.1" r="1.7"/><circle cx="699.1" cy="371.7" r="1.7"/><circle cx="567.9" cy="340.6" r="1.7"/><circle cx="482.7" cy="451.4" r="1.7"/><circle cx="551.6" cy="317.0" r="1.7"/><circle cx="549.3" cy="377.2" r="1.7"/><circle cx="638.8" cy="348.7" r="1.7"/><circle cx="632.1" cy="333.9" r="1.7"/><circle cx="707.2" cy="394.9" r="1.7"/><circle cx="649.3" cy="384.9" r="1.7"/><circle cx="616.6" cy="388.3" r="1.7"/><circle cx="570.9" cy="445.3" r="1.7"/><circle cx="533.0" cy="420.6" r="1.7"/><circle cx="587.6" cy="501.5" r="1.7"/><circle cx="649.4" cy="399.6" r="1.7"/><circle cx="577.4" cy="386.5" r="1.7"/><circle cx="595.8" cy="314.4" r="1.7"/><circle cx="691.8" cy="333.3" r="1.7"/><circle cx="699.9" cy="308.1" r="1.7"/><circle cx="650.9" cy="486.8" r="1.7"/><circle cx="510.9" cy="430.7" r="1.7"/><circle cx="662.9" cy="369.1" r="1.7"/><circle cx="605.6" cy="436.0" r="1.7"/><circle cx="514.2" cy="413.6" r="1.7"/><circle cx="686.1" cy="380.4" r="1.7"/><circle cx="655.3" cy="476.7" r="1.7"/><circle cx="535.4" cy="376.0" r="1.7"/><circle cx="685.1" cy="349.5" r="1.7"/><circle cx="702.1" cy="302.1" r="1.7"/><circle cx="608.8" cy="214.7" r="1.7"/><circle cx="710.9" cy="338.4" r="1.7"/><circle cx="577.3" cy="470.3" r="1.7"/><circle cx="529.0" cy="363.4" r="1.7"/><circle cx="574.0" cy="280.9" r="1.7"/><circle cx="651.6" cy="458.3" r="1.7"/><circle cx="623.3" cy="425.8" r="1.7"/><circle cx="736.0" cy="328.2" r="1.7"/><circle cx="646.4" cy="435.7" r="1.7"/><circle cx="770.5" cy="365.6" r="1.7"/><circle cx="718.1" cy="412.9" r="1.7"/><circle cx="577.2" cy="321.7" r="1.7"/><circle cx="725.4" cy="371.2" r="1.7"/><circle cx="571.5" cy="365.7" r="1.7"/><circle cx="681.3" cy="329.5" r="1.7"/><circle cx="789.2" cy="367.8" r="1.7"/><circle cx="672.7" cy="448.1" r="1.7"/><circle cx="706.6" cy="430.4" r="1.7"/><circle cx="690.4" cy="387.6" r="1.7"/><circle cx="529.2" cy="168.0" r="1.7"/><circle cx="477.0" cy="465.9" r="1.7"/><circle cx="541.8" cy="409.4" r="1.7"/><circle cx="704.0" cy="399.3" r="1.7"/><circle cx="801.6" cy="306.8" r="1.7"/><circle cx="710.9" cy="366.3" r="1.7"/><circle cx="769.5" cy="340.2" r="1.7"/><circle cx="789.1" cy="354.5" r="1.7"/><circle cx="620.0" cy="473.6" r="1.7"/><circle cx="804.2" cy="342.3" r="1.7"/><circle cx="688.4" cy="419.5" r="1.7"/><circle cx="500.1" cy="386.2" r="1.7"/><circle cx="739.8" cy="334.7" r="1.7"/><circle cx="528.7" cy="303.1" r="1.7"/><circle cx="583.2" cy="163.2" r="1.7"/><circle cx="789.5" cy="323.5" r="1.7"/><circle cx="622.8" cy="483.5" r="1.7"/><circle cx="695.6" cy="310.6" r="1.7"/><circle cx="780.9" cy="346.9" r="1.7"/><circle cx="611.4" cy="404.5" r="1.7"/><circle cx="691.7" cy="344.2" r="1.7"/><circle cx="647.3" cy="312.8" r="1.7"/><circle cx="617.3" cy="367.6" r="1.7"/><circle cx="621.9" cy="314.5" r="1.7"/><circle cx="600.9" cy="348.1" r="1.7"/><circle cx="588.1" cy="462.7" r="1.7"/><circle cx="673.8" cy="308.9" r="1.7"/><circle cx="624.8" cy="410.2" r="1.7"/><circle cx="619.1" cy="482.9" r="1.7"/><circle cx="786.9" cy="317.7" r="1.7"/><circle cx="612.8" cy="431.9" r="1.7"/><circle cx="649.1" cy="334.6" r="1.7"/><circle cx="505.8" cy="420.2" r="1.7"/><circle cx="624.6" cy="362.4" r="1.7"/><circle cx="643.4" cy="434.0" r="1.7"/><circle cx="598.3" cy="502.7" r="1.7"/><circle cx="716.2" cy="340.6" r="1.7"/><circle cx="725.4" cy="380.4" r="1.7"/><circle cx="587.9" cy="366.0" r="1.7"/><circle cx="748.3" cy="400.7" r="1.7"/><circle cx="703.8" cy="292.9" r="1.7"/><circle cx="707.8" cy="330.7" r="1.7"/><circle cx="626.9" cy="493.4" r="1.7"/><circle cx="565.7" cy="472.1" r="1.7"/><circle cx="670.3" cy="420.6" r="1.7"/><circle cx="719.9" cy="353.5" r="1.7"/><circle cx="543.3" cy="162.5" r="1.7"/><circle cx="565.8" cy="346.2" r="1.7"/><circle cx="700.3" cy="441.6" r="1.7"/><circle cx="724.1" cy="357.8" r="1.7"/><circle cx="641.9" cy="373.7" r="1.7"/><circle cx="584.2" cy="472.3" r="1.7"/><circle cx="662.6" cy="339.4" r="1.7"/><circle cx="813.8" cy="332.5" r="1.7"/><circle cx="535.2" cy="342.7" r="1.7"/><circle cx="655.5" cy="349.2" r="1.7"/><circle cx="676.5" cy="426.6" r="1.7"/><circle cx="539.5" cy="259.5" r="1.7"/><circle cx="792.0" cy="346.3" r="1.7"/><circle cx="604.9" cy="302.4" r="1.7"/><circle cx="554.8" cy="312.5" r="1.7"/><circle cx="679.0" cy="324.2" r="1.7"/><circle cx="653.7" cy="368.6" r="1.7"/><circle cx="643.5" cy="478.1" r="1.7"/><circle cx="547.9" cy="297.3" r="1.7"/><circle cx="697.9" cy="405.5" r="1.7"/><circle cx="499.9" cy="423.4" r="1.7"/><circle cx="687.2" cy="335.3" r="1.7"/><circle cx="715.3" cy="426.3" r="1.7"/><circle cx="649.6" cy="369.0" r="1.7"/><circle cx="758.9" cy="371.7" r="1.7"/><circle cx="726.8" cy="353.0" r="1.7"/><circle cx="510.9" cy="388.3" r="1.7"/><circle cx="572.9" cy="469.6" r="1.7"/><circle cx="711.4" cy="332.8" r="1.7"/><circle cx="533.8" cy="359.2" r="1.7"/><circle cx="659.3" cy="302.8" r="1.7"/><circle cx="662.1" cy="322.4" r="1.7"/><circle cx="582.8" cy="263.2" r="1.7"/><circle cx="524.4" cy="341.8" r="1.7"/><circle cx="514.9" cy="403.0" r="1.7"/><circle cx="726.0" cy="400.1" r="1.7"/><circle cx="673.4" cy="317.1" r="1.7"/>
</g>
<g fill="#2b93e6" stroke="#fff" stroke-opacity=".62" stroke-width="1.2">
<circle cx="828.5" cy="364.0" r="1.7"/><circle cx="747.6" cy="432.6" r="1.7"/><circle cx="730.0" cy="428.6" r="1.7"/><circle cx="700.2" cy="477.2" r="1.7"/><circle cx="737.9" cy="494.4" r="1.7"/><circle cx="735.4" cy="444.2" r="1.7"/><circle cx="679.6" cy="503.7" r="1.7"/><circle cx="788.5" cy="371.9" r="1.7"/><circle cx="731.2" cy="448.4" r="1.7"/><circle cx="823.9" cy="371.7" r="1.7"/><circle cx="673.4" cy="477.9" r="1.7"/><circle cx="723.6" cy="444.6" r="1.7"/><circle cx="742.2" cy="462.9" r="1.7"/><circle cx="716.5" cy="467.6" r="1.7"/><circle cx="690.0" cy="504.2" r="1.7"/><circle cx="722.4" cy="449.3" r="1.7"/><circle cx="677.3" cy="507.7" r="1.7"/><circle cx="660.7" cy="494.6" r="1.7"/><circle cx="749.1" cy="422.6" r="1.7"/><circle cx="757.8" cy="416.4" r="1.7"/><circle cx="692.8" cy="493.0" r="1.7"/><circle cx="690.4" cy="467.5" r="1.7"/><circle cx="704.2" cy="497.0" r="1.7"/><circle cx="792.2" cy="481.1" r="1.7"/><circle cx="801.4" cy="452.5" r="1.7"/><circle cx="797.8" cy="383.3" r="1.7"/><circle cx="695.4" cy="486.1" r="1.7"/><circle cx="821.7" cy="395.3" r="1.7"/><circle cx="825.8" cy="440.0" r="1.7"/><circle cx="850.7" cy="386.1" r="1.7"/><circle cx="818.1" cy="362.7" r="1.7"/><circle cx="829.7" cy="417.9" r="1.7"/><circle cx="701.8" cy="470.1" r="1.7"/><circle cx="796.1" cy="455.1" r="1.7"/><circle cx="675.7" cy="465.1" r="1.7"/><circle cx="684.9" cy="500.8" r="1.7"/><circle cx="787.5" cy="468.1" r="1.7"/><circle cx="697.1" cy="472.0" r="1.7"/><circle cx="821.9" cy="429.0" r="1.7"/><circle cx="846.8" cy="365.8" r="1.7"/><circle cx="805.8" cy="452.4" r="1.7"/><circle cx="817.7" cy="333.4" r="1.7"/><circle cx="803.3" cy="381.8" r="1.7"/><circle cx="817.3" cy="383.4" r="1.7"/><circle cx="767.1" cy="394.8" r="1.7"/><circle cx="700.2" cy="487.4" r="1.7"/><circle cx="794.8" cy="438.6" r="1.7"/><circle cx="821.3" cy="367.3" r="1.7"/><circle cx="655.9" cy="486.1" r="1.7"/><circle cx="762.1" cy="479.5" r="1.7"/><circle cx="822.0" cy="333.2" r="1.7"/><circle cx="778.5" cy="381.4" r="1.7"/><circle cx="817.9" cy="422.8" r="1.7"/><circle cx="799.4" cy="432.8" r="1.7"/><circle cx="752.7" cy="433.6" r="1.7"/><circle cx="790.2" cy="458.8" r="1.7"/><circle cx="682.7" cy="464.6" r="1.7"/><circle cx="744.8" cy="482.6" r="1.7"/><circle cx="736.1" cy="463.8" r="1.7"/><circle cx="746.6" cy="444.3" r="1.7"/><circle cx="693.6" cy="500.2" r="1.7"/><circle cx="740.4" cy="433.0" r="1.7"/><circle cx="795.5" cy="402.3" r="1.7"/><circle cx="782.9" cy="455.3" r="1.7"/><circle cx="671.2" cy="500.9" r="1.7"/><circle cx="779.5" cy="465.7" r="1.7"/><circle cx="692.9" cy="505.4" r="1.7"/><circle cx="662.8" cy="514.4" r="1.7"/><circle cx="681.1" cy="479.5" r="1.7"/><circle cx="750.5" cy="440.2" r="1.7"/><circle cx="818.5" cy="406.2" r="1.7"/><circle cx="706.6" cy="470.1" r="1.7"/><circle cx="792.3" cy="435.7" r="1.7"/><circle cx="795.4" cy="363.1" r="1.7"/><circle cx="805.6" cy="367.6" r="1.7"/><circle cx="690.8" cy="496.1" r="1.7"/><circle cx="756.8" cy="446.5" r="1.7"/><circle cx="703.2" cy="500.4" r="1.7"/><circle cx="804.1" cy="468.2" r="1.7"/><circle cx="781.5" cy="434.1" r="1.7"/><circle cx="771.5" cy="455.9" r="1.7"/><circle cx="730.0" cy="454.8" r="1.7"/><circle cx="689.8" cy="489.6" r="1.7"/><circle cx="769.1" cy="448.9" r="1.7"/><circle cx="783.5" cy="429.6" r="1.7"/><circle cx="720.0" cy="461.8" r="1.7"/><circle cx="813.4" cy="362.8" r="1.7"/><circle cx="694.6" cy="477.2" r="1.7"/><circle cx="723.8" cy="470.6" r="1.7"/><circle cx="824.0" cy="359.3" r="1.7"/><circle cx="741.2" cy="459.4" r="1.7"/><circle cx="677.5" cy="491.6" r="1.7"/><circle cx="783.7" cy="418.1" r="1.7"/><circle cx="773.1" cy="446.7" r="1.7"/><circle cx="720.9" cy="499.6" r="1.7"/><circle cx="675.7" cy="483.9" r="1.7"/><circle cx="666.5" cy="511.7" r="1.7"/><circle cx="699.2" cy="507.8" r="1.7"/><circle cx="651.3" cy="502.1" r="1.7"/><circle cx="656.7" cy="498.5" r="1.7"/><circle cx="803.1" cy="441.1" r="1.7"/><circle cx="787.9" cy="477.9" r="1.7"/><circle cx="718.2" cy="457.9" r="1.7"/><circle cx="683.2" cy="470.9" r="1.7"/><circle cx="696.3" cy="482.5" r="1.7"/><circle cx="799.6" cy="367.2" r="1.7"/><circle cx="814.2" cy="463.0" r="1.7"/><circle cx="690.5" cy="477.4" r="1.7"/><circle cx="838.4" cy="353.0" r="1.7"/><circle cx="814.8" cy="375.0" r="1.7"/>
</g>
<g fill="#2fe22f" stroke="#fff" stroke-opacity=".62" stroke-width="1.2">
<circle cx="501.0" cy="536.4" r="1.7"/><circle cx="483.1" cy="529.5" r="1.7"/><circle cx="525.3" cy="481.0" r="1.7"/><circle cx="537.6" cy="582.6" r="1.7"/><circle cx="437.9" cy="512.9" r="1.7"/><circle cx="468.2" cy="582.1" r="1.7"/><circle cx="488.9" cy="502.5" r="1.7"/><circle cx="515.6" cy="493.4" r="1.7"/><circle cx="532.4" cy="575.8" r="1.7"/><circle cx="475.8" cy="485.9" r="1.7"/><circle cx="476.2" cy="474.7" r="1.7"/><circle cx="464.9" cy="507.7" r="1.7"/><circle cx="477.9" cy="510.0" r="1.7"/><circle cx="463.0" cy="561.3" r="1.7"/><circle cx="551.0" cy="464.7" r="1.7"/><circle cx="475.5" cy="591.8" r="1.7"/><circle cx="507.2" cy="524.3" r="1.7"/><circle cx="457.1" cy="503.0" r="1.7"/><circle cx="440.1" cy="500.5" r="1.7"/><circle cx="544.5" cy="482.0" r="1.7"/><circle cx="454.8" cy="525.5" r="1.7"/><circle cx="502.8" cy="529.5" r="1.7"/><circle cx="456.2" cy="507.0" r="1.7"/><circle cx="489.9" cy="572.7" r="1.7"/><circle cx="548.1" cy="585.9" r="1.7"/><circle cx="455.3" cy="495.8" r="1.7"/><circle cx="534.8" cy="474.6" r="1.7"/><circle cx="500.0" cy="563.7" r="1.7"/><circle cx="509.2" cy="587.1" r="1.7"/><circle cx="538.9" cy="600.7" r="1.7"/><circle cx="488.6" cy="551.4" r="1.7"/><circle cx="466.4" cy="517.8" r="1.7"/><circle cx="495.2" cy="457.1" r="1.7"/><circle cx="460.6" cy="487.3" r="1.7"/><circle cx="491.4" cy="456.0" r="1.7"/><circle cx="544.5" cy="565.4" r="1.7"/><circle cx="475.4" cy="581.8" r="1.7"/><circle cx="454.8" cy="469.8" r="1.7"/><circle cx="452.5" cy="528.7" r="1.7"/><circle cx="454.7" cy="549.5" r="1.7"/><circle cx="485.5" cy="505.5" r="1.7"/><circle cx="477.8" cy="567.8" r="1.7"/><circle cx="552.4" cy="574.8" r="1.7"/><circle cx="519.5" cy="610.2" r="1.7"/><circle cx="507.4" cy="514.5" r="1.7"/><circle cx="473.5" cy="528.7" r="1.7"/><circle cx="479.5" cy="605.6" r="1.7"/><circle cx="496.5" cy="501.5" r="1.7"/><circle cx="516.4" cy="585.4" r="1.7"/><circle cx="449.0" cy="567.6" r="1.7"/><circle cx="545.8" cy="467.2" r="1.7"/><circle cx="519.5" cy="460.8" r="1.7"/><circle cx="483.6" cy="486.9" r="1.7"/><circle cx="530.9" cy="472.4" r="1.7"/><circle cx="509.1" cy="466.4" r="1.7"/><circle cx="482.5" cy="567.8" r="1.7"/><circle cx="517.3" cy="498.5" r="1.7"/><circle cx="440.4" cy="491.2" r="1.7"/><circle cx="522.3" cy="458.1" r="1.7"/><circle cx="547.2" cy="462.2" r="1.7"/><circle cx="500.0" cy="502.2" r="1.7"/><circle cx="540.7" cy="556.7" r="1.7"/><circle cx="553.2" cy="522.1" r="1.7"/><circle cx="527.3" cy="577.8" r="1.7"/><circle cx="527.6" cy="542.5" r="1.7"/><circle cx="495.5" cy="531.2" r="1.7"/><circle cx="482.8" cy="541.3" r="1.7"/><circle cx="508.0" cy="478.1" r="1.7"/><circle cx="471.9" cy="545.2" r="1.7"/><circle cx="441.6" cy="578.1" r="1.7"/><circle cx="513.3" cy="588.2" r="1.7"/><circle cx="486.9" cy="540.6" r="1.7"/><circle cx="433.7" cy="518.2" r="1.7"/><circle cx="496.6" cy="511.7" r="1.7"/><circle cx="522.3" cy="518.4" r="1.7"/><circle cx="501.8" cy="613.3" r="1.7"/><circle cx="448.2" cy="496.5" r="1.7"/><circle cx="489.3" cy="470.7" r="1.7"/><circle cx="536.4" cy="572.6" r="1.7"/><circle cx="450.2" cy="563.9" r="1.7"/><circle cx="484.8" cy="476.7" r="1.7"/><circle cx="547.2" cy="527.6" r="1.7"/><circle cx="480.0" cy="571.8" r="1.7"/><circle cx="533.9" cy="600.0" r="1.7"/><circle cx="532.5" cy="461.3" r="1.7"/><circle cx="454.5" cy="536.0" r="1.7"/><circle cx="513.2" cy="481.2" r="1.7"/><circle cx="524.6" cy="474.3" r="1.7"/><circle cx="542.2" cy="535.7" r="1.7"/><circle cx="481.3" cy="493.7" r="1.7"/><circle cx="531.3" cy="591.4" r="1.7"/><circle cx="534.7" cy="479.4" r="1.7"/><circle cx="478.7" cy="496.7" r="1.7"/><circle cx="538.2" cy="575.7" r="1.7"/><circle cx="535.6" cy="530.2" r="1.7"/><circle cx="552.8" cy="604.8" r="1.7"/><circle cx="453.8" cy="583.0" r="1.7"/><circle cx="483.5" cy="510.2" r="1.7"/><circle cx="480.8" cy="580.8" r="1.7"/><circle cx="526.9" cy="555.5" r="1.7"/><circle cx="501.5" cy="462.6" r="1.7"/><circle cx="471.7" cy="517.0" r="1.7"/><circle cx="544.5" cy="589.9" r="1.7"/><circle cx="433.2" cy="510.4" r="1.7"/><circle cx="438.6" cy="525.4" r="1.7"/><circle cx="438.6" cy="508.3" r="1.7"/><circle cx="450.4" cy="534.5" r="1.7"/><circle cx="480.8" cy="599.3" r="1.7"/>
</g>
<g fill="#e62e2e" stroke="#fff" stroke-opacity=".62" stroke-width="1.2">
<circle cx="644.2" cy="521.2" r="1.7"/><circle cx="606.8" cy="538.3" r="1.7"/><circle cx="622.6" cy="538.9" r="1.7"/><circle cx="627.4" cy="508.6" r="1.7"/><circle cx="587.9" cy="573.5" r="1.7"/><circle cx="634.3" cy="525.5" r="1.7"/><circle cx="559.7" cy="568.7" r="1.7"/><circle cx="613.3" cy="512.5" r="1.7"/><circle cx="606.0" cy="510.4" r="1.7"/><circle cx="615.1" cy="556.1" r="1.7"/><circle cx="576.6" cy="584.8" r="1.7"/><circle cx="591.1" cy="572.2" r="1.7"/><circle cx="580.3" cy="543.4" r="1.7"/><circle cx="611.8" cy="501.6" r="1.7"/><circle cx="646.8" cy="507.5" r="1.7"/><circle cx="639.5" cy="511.6" r="1.7"/><circle cx="608.8" cy="549.6" r="1.7"/><circle cx="555.6" cy="516.6" r="1.7"/><circle cx="630.5" cy="516.3" r="1.7"/><circle cx="612.6" cy="525.3" r="1.7"/><circle cx="646.3" cy="515.5" r="1.7"/><circle cx="561.4" cy="586.0" r="1.7"/><circle cx="673.9" cy="533.5" r="1.7"/><circle cx="584.0" cy="561.3" r="1.7"/><circle cx="563.4" cy="548.6" r="1.7"/><circle cx="568.0" cy="512.3" r="1.7"/><circle cx="617.1" cy="516.5" r="1.7"/><circle cx="591.4" cy="552.0" r="1.7"/><circle cx="620.9" cy="520.8" r="1.7"/><circle cx="627.9" cy="525.3" r="1.7"/><circle cx="645.1" cy="510.7" r="1.7"/><circle cx="582.3" cy="516.7" r="1.7"/><circle cx="639.9" cy="518.5" r="1.7"/><circle cx="588.4" cy="570.0" r="1.7"/><circle cx="584.0" cy="535.3" r="1.7"/><circle cx="689.9" cy="513.2" r="1.7"/><circle cx="640.4" cy="499.6" r="1.7"/><circle cx="615.7" cy="545.2" r="1.7"/><circle cx="596.9" cy="554.7" r="1.7"/><circle cx="591.6" cy="544.6" r="1.7"/><circle cx="612.7" cy="561.5" r="1.7"/><circle cx="580.4" cy="548.4" r="1.7"/><circle cx="597.5" cy="529.7" r="1.7"/><circle cx="601.1" cy="526.5" r="1.7"/><circle cx="561.6" cy="533.2" r="1.7"/><circle cx="622.5" cy="524.2" r="1.7"/><circle cx="575.6" cy="570.8" r="1.7"/><circle cx="567.5" cy="556.6" r="1.7"/><circle cx="595.7" cy="559.0" r="1.7"/><circle cx="690.7" cy="519.9" r="1.7"/><circle cx="710.8" cy="519.2" r="1.7"/><circle cx="561.9" cy="510.5" r="1.7"/><circle cx="645.9" cy="498.7" r="1.7"/><circle cx="607.9" cy="514.7" r="1.7"/><circle cx="626.9" cy="536.2" r="1.7"/><circle cx="658.1" cy="529.7" r="1.7"/><circle cx="563.0" cy="561.3" r="1.7"/><circle cx="587.1" cy="565.0" r="1.7"/><circle cx="570.6" cy="507.9" r="1.7"/><circle cx="610.5" cy="519.4" r="1.7"/><circle cx="641.8" cy="527.4" r="1.7"/><circle cx="679.4" cy="529.5" r="1.7"/><circle cx="604.7" cy="507.1" r="1.7"/><circle cx="712.2" cy="515.9" r="1.7"/><circle cx="634.5" cy="506.0" r="1.7"/><circle cx="547.8" cy="600.5" r="1.7"/><circle cx="615.6" cy="502.5" r="1.7"/><circle cx="570.5" cy="538.4" r="1.7"/><circle cx="608.7" cy="529.8" r="1.7"/><circle cx="642.7" cy="532.6" r="1.7"/><circle cx="562.9" cy="530.1" r="1.7"/><circle cx="581.0" cy="512.2" r="1.7"/><circle cx="588.8" cy="561.3" r="1.7"/><circle cx="668.9" cy="530.5" r="1.7"/><circle cx="621.3" cy="506.8" r="1.7"/><circle cx="619.8" cy="514.4" r="1.7"/><circle cx="598.4" cy="548.9" r="1.7"/><circle cx="656.7" cy="525.3" r="1.7"/><circle cx="617.2" cy="496.2" r="1.7"/><circle cx="635.5" cy="514.0" r="1.7"/><circle cx="685.3" cy="533.1" r="1.7"/><circle cx="610.7" cy="509.8" r="1.7"/>
</g>
<g fill="#5a1fb4" stroke="#fff" stroke-opacity=".62" stroke-width="1.2">
<circle cx="244.8" cy="593.3" r="1.7"/><circle cx="466.7" cy="602.9" r="1.7"/><circle cx="435.7" cy="700.6" r="1.7"/><circle cx="312.9" cy="626.3" r="1.7"/><circle cx="362.0" cy="639.6" r="1.7"/><circle cx="341.1" cy="651.5" r="1.7"/><circle cx="426.7" cy="541.5" r="1.7"/><circle cx="372.6" cy="519.7" r="1.7"/><circle cx="347.8" cy="619.2" r="1.7"/><circle cx="312.5" cy="619.3" r="1.7"/><circle cx="262.0" cy="589.9" r="1.7"/><circle cx="367.1" cy="633.8" r="1.7"/><circle cx="263.9" cy="644.7" r="1.7"/><circle cx="178.0" cy="611.7" r="1.7"/><circle cx="297.2" cy="605.8" r="1.7"/><circle cx="396.5" cy="620.9" r="1.7"/><circle cx="462.2" cy="601.4" r="1.7"/><circle cx="256.6" cy="661.3" r="1.7"/><circle cx="318.6" cy="621.4" r="1.7"/><circle cx="343.2" cy="600.4" r="1.7"/><circle cx="439.7" cy="655.6" r="1.7"/><circle cx="360.3" cy="693.0" r="1.7"/><circle cx="362.5" cy="565.0" r="1.7"/><circle cx="414.6" cy="612.4" r="1.7"/><circle cx="449.7" cy="652.8" r="1.7"/><circle cx="289.9" cy="653.7" r="1.7"/><circle cx="382.1" cy="631.7" r="1.7"/><circle cx="300.5" cy="616.4" r="1.7"/><circle cx="360.1" cy="614.6" r="1.7"/><circle cx="389.8" cy="634.3" r="1.7"/><circle cx="468.3" cy="622.6" r="1.7"/><circle cx="368.5" cy="681.6" r="1.7"/><circle cx="375.0" cy="659.7" r="1.7"/><circle cx="306.3" cy="648.0" r="1.7"/><circle cx="390.8" cy="639.7" r="1.7"/><circle cx="375.9" cy="617.4" r="1.7"/><circle cx="387.8" cy="529.0" r="1.7"/><circle cx="393.3" cy="610.8" r="1.7"/><circle cx="370.7" cy="636.1" r="1.7"/><circle cx="384.0" cy="610.2" r="1.7"/><circle cx="226.5" cy="615.8" r="1.7"/><circle cx="413.5" cy="581.9" r="1.7"/><circle cx="368.8" cy="587.5" r="1.7"/><circle cx="369.3" cy="647.4" r="1.7"/><circle cx="430.4" cy="641.5" r="1.7"/><circle cx="325.2" cy="641.9" r="1.7"/><circle cx="235.5" cy="597.4" r="1.7"/><circle cx="377.8" cy="592.6" r="1.7"/><circle cx="396.6" cy="646.8" r="1.7"/><circle cx="432.0" cy="652.0" r="1.7"/><circle cx="354.0" cy="647.7" r="1.7"/><circle cx="263.2" cy="615.4" r="1.7"/><circle cx="384.5" cy="614.6" r="1.7"/><circle cx="357.1" cy="639.4" r="1.7"/><circle cx="233.2" cy="629.8" r="1.7"/><circle cx="369.4" cy="624.9" r="1.7"/><circle cx="435.0" cy="545.7" r="1.7"/><circle cx="270.6" cy="625.3" r="1.7"/><circle cx="459.9" cy="630.4" r="1.7"/><circle cx="265.7" cy="635.7" r="1.7"/><circle cx="233.7" cy="653.7" r="1.7"/><circle cx="414.0" cy="635.0" r="1.7"/><circle cx="428.8" cy="602.3" r="1.7"/><circle cx="426.3" cy="647.3" r="1.7"/><circle cx="125.2" cy="604.6" r="1.7"/><circle cx="278.5" cy="655.3" r="1.7"/><circle cx="259.3" cy="649.0" r="1.7"/><circle cx="447.7" cy="616.4" r="1.7"/><circle cx="353.8" cy="541.2" r="1.7"/><circle cx="390.9" cy="682.3" r="1.7"/><circle cx="226.9" cy="639.2" r="1.7"/><circle cx="337.5" cy="618.5" r="1.7"/><circle cx="315.5" cy="642.2" r="1.7"/><circle cx="388.0" cy="591.4" r="1.7"/><circle cx="330.0" cy="660.8" r="1.7"/><circle cx="219.9" cy="632.6" r="1.7"/><circle cx="223.5" cy="624.7" r="1.7"/><circle cx="427.2" cy="695.3" r="1.7"/><circle cx="329.6" cy="653.2" r="1.7"/><circle cx="242.4" cy="618.6" r="1.7"/><circle cx="385.9" cy="576.5" r="1.7"/><circle cx="137.2" cy="601.2" r="1.7"/><circle cx="408.5" cy="678.8" r="1.7"/><circle cx="239.3" cy="594.8" r="1.7"/><circle cx="398.3" cy="613.9" r="1.7"/><circle cx="144.1" cy="607.6" r="1.7"/><circle cx="354.1" cy="589.3" r="1.7"/><circle cx="216.1" cy="613.0" r="1.7"/><circle cx="362.8" cy="655.5" r="1.7"/><circle cx="420.0" cy="615.9" r="1.7"/><circle cx="455.1" cy="661.9" r="1.7"/><circle cx="381.8" cy="526.9" r="1.7"/><circle cx="430.5" cy="593.5" r="1.7"/><circle cx="187.7" cy="583.1" r="1.7"/><circle cx="188.2" cy="607.1" r="1.7"/><circle cx="371.4" cy="592.5" r="1.7"/><circle cx="384.1" cy="573.8" r="1.7"/><circle cx="134.9" cy="605.0" r="1.7"/><circle cx="366.4" cy="656.3" r="1.7"/><circle cx="249.0" cy="588.7" r="1.7"/><circle cx="420.7" cy="587.1" r="1.7"/><circle cx="371.5" cy="577.8" r="1.7"/><circle cx="339.3" cy="669.4" r="1.7"/><circle cx="399.6" cy="650.0" r="1.7"/><circle cx="360.7" cy="620.2" r="1.7"/><circle cx="284.3" cy="647.9" r="1.7"/><circle cx="322.5" cy="618.2" r="1.7"/><circle cx="288.1" cy="618.5" r="1.7"/><circle cx="432.7" cy="665.7" r="1.7"/><circle cx="292.4" cy="692.6" r="1.7"/><circle cx="420.6" cy="645.8" r="1.7"/><circle cx="365.1" cy="576.3" r="1.7"/><circle cx="322.6" cy="626.8" r="1.7"/><circle cx="353.7" cy="551.4" r="1.7"/><circle cx="344.1" cy="609.6" r="1.7"/><circle cx="425.9" cy="610.7" r="1.7"/><circle cx="276.3" cy="611.6" r="1.7"/><circle cx="409.9" cy="616.8" r="1.7"/><circle cx="403.0" cy="629.4" r="1.7"/><circle cx="361.9" cy="633.9" r="1.7"/><circle cx="418.0" cy="619.2" r="1.7"/><circle cx="139.2" cy="609.4" r="1.7"/><circle cx="429.2" cy="576.0" r="1.7"/><circle cx="406.1" cy="601.6" r="1.7"/><circle cx="419.8" cy="699.0" r="1.7"/><circle cx="393.9" cy="548.5" r="1.7"/><circle cx="383.8" cy="674.7" r="1.7"/><circle cx="396.3" cy="656.4" r="1.7"/><circle cx="333.5" cy="617.7" r="1.7"/><circle cx="372.5" cy="614.3" r="1.7"/><circle cx="382.5" cy="705.9" r="1.7"/><circle cx="338.7" cy="661.5" r="1.7"/><circle cx="353.4" cy="665.6" r="1.7"/><circle cx="271.1" cy="646.8" r="1.7"/><circle cx="268.4" cy="628.6" r="1.7"/><circle cx="185.8" cy="600.1" r="1.7"/><circle cx="379.6" cy="699.2" r="1.7"/><circle cx="281.9" cy="644.7" r="1.7"/><circle cx="388.5" cy="671.5" r="1.7"/><circle cx="403.7" cy="678.8" r="1.7"/><circle cx="284.6" cy="599.5" r="1.7"/><circle cx="379.1" cy="651.4" r="1.7"/><circle cx="413.1" cy="607.5" r="1.7"/><circle cx="429.5" cy="611.2" r="1.7"/><circle cx="248.9" cy="674.7" r="1.7"/><circle cx="286.9" cy="636.1" r="1.7"/><circle cx="336.8" cy="666.4" r="1.7"/><circle cx="259.7" cy="594.5" r="1.7"/><circle cx="424.4" cy="625.9" r="1.7"/><circle cx="367.2" cy="600.6" r="1.7"/><circle cx="257.5" cy="629.4" r="1.7"/><circle cx="383.9" cy="623.4" r="1.7"/><circle cx="464.7" cy="634.2" r="1.7"/><circle cx="360.0" cy="592.7" r="1.7"/><circle cx="377.9" cy="533.8" r="1.7"/><circle cx="343.2" cy="662.9" r="1.7"/><circle cx="252.7" cy="597.5" r="1.7"/><circle cx="164.5" cy="609.4" r="1.7"/><circle cx="368.9" cy="652.5" r="1.7"/><circle cx="271.7" cy="602.9" r="1.7"/><circle cx="155.1" cy="588.7" r="1.7"/><circle cx="397.8" cy="667.4" r="1.7"/><circle cx="417.6" cy="526.4" r="1.7"/><circle cx="384.0" cy="605.7" r="1.7"/><circle cx="326.6" cy="632.0" r="1.7"/><circle cx="432.7" cy="600.8" r="1.7"/><circle cx="178.1" cy="590.2" r="1.7"/><circle cx="403.0" cy="697.1" r="1.7"/><circle cx="386.0" cy="597.6" r="1.7"/><circle cx="386.2" cy="663.8" r="1.7"/><circle cx="413.3" cy="543.6" r="1.7"/><circle cx="402.6" cy="596.4" r="1.7"/><circle cx="384.7" cy="645.7" r="1.7"/><circle cx="376.6" cy="521.3" r="1.7"/><circle cx="476.5" cy="636.7" r="1.7"/><circle cx="263.4" cy="658.4" r="1.7"/><circle cx="331.4" cy="638.5" r="1.7"/><circle cx="304.1" cy="615.5" r="1.7"/><circle cx="444.2" cy="602.4" r="1.7"/><circle cx="333.7" cy="634.1" r="1.7"/><circle cx="421.2" cy="656.3" r="1.7"/><circle cx="395.1" cy="593.6" r="1.7"/><circle cx="414.4" cy="657.7" r="1.7"/><circle cx="407.1" cy="713.5" r="1.7"/><circle cx="385.5" cy="681.5" r="1.7"/><circle cx="203.4" cy="617.2" r="1.7"/><circle cx="378.1" cy="633.4" r="1.7"/><circle cx="433.4" cy="591.1" r="1.7"/><circle cx="350.9" cy="512.2" r="1.7"/><circle cx="280.4" cy="659.4" r="1.7"/><circle cx="256.7" cy="613.3" r="1.7"/><circle cx="350.5" cy="669.7" r="1.7"/><circle cx="299.7" cy="677.2" r="1.7"/><circle cx="267.0" cy="604.7" r="1.7"/><circle cx="360.3" cy="558.0" r="1.7"/><circle cx="419.1" cy="608.0" r="1.7"/><circle cx="221.0" cy="619.3" r="1.7"/><circle cx="248.9" cy="605.0" r="1.7"/><circle cx="366.5" cy="645.9" r="1.7"/><circle cx="413.8" cy="618.6" r="1.7"/><circle cx="287.4" cy="612.6" r="1.7"/><circle cx="302.2" cy="629.0" r="1.7"/><circle cx="433.3" cy="679.2" r="1.7"/><circle cx="436.7" cy="620.1" r="1.7"/><circle cx="310.9" cy="606.1" r="1.7"/><circle cx="383.1" cy="620.2" r="1.7"/><circle cx="408.0" cy="696.3" r="1.7"/><circle cx="376.3" cy="642.3" r="1.7"/><circle cx="309.7" cy="610.3" r="1.7"/><circle cx="399.1" cy="561.6" r="1.7"/><circle cx="220.6" cy="590.4" r="1.7"/><circle cx="271.6" cy="669.0" r="1.7"/><circle cx="248.9" cy="641.5" r="1.7"/><circle cx="340.7" cy="656.9" r="1.7"/><circle cx="450.8" cy="591.8" r="1.7"/><circle cx="310.2" cy="630.7" r="1.7"/><circle cx="338.7" cy="625.7" r="1.7"/><circle cx="261.6" cy="632.7" r="1.7"/><circle cx="412.7" cy="653.0" r="1.7"/><circle cx="277.0" cy="659.8" r="1.7"/><circle cx="413.0" cy="598.3" r="1.7"/><circle cx="388.1" cy="583.4" r="1.7"/><circle cx="390.4" cy="687.0" r="1.7"/><circle cx="455.8" cy="594.5" r="1.7"/><circle cx="299.1" cy="630.6" r="1.7"/><circle cx="352.9" cy="621.9" r="1.7"/><circle cx="165.7" cy="593.2" r="1.7"/><circle cx="348.9" cy="652.2" r="1.7"/><circle cx="255.3" cy="589.1" r="1.7"/><circle cx="386.4" cy="627.7" r="1.7"/><circle cx="389.8" cy="656.0" r="1.7"/><circle cx="435.3" cy="695.3" r="1.7"/><circle cx="429.1" cy="628.3" r="1.7"/><circle cx="435.5" cy="652.7" r="1.7"/><circle cx="261.6" cy="622.3" r="1.7"/>
</g>
<g fill="#27a6a8" stroke="#fff" stroke-opacity=".62" stroke-width="1.2">
<circle cx="206.7" cy="891.1" r="1.7"/><circle cx="322.6" cy="730.7" r="1.7"/><circle cx="373.8" cy="814.9" r="1.7"/><circle cx="323.2" cy="792.7" r="1.7"/><circle cx="273.8" cy="688.4" r="1.7"/><circle cx="272.3" cy="767.2" r="1.7"/><circle cx="286.5" cy="787.9" r="1.7"/><circle cx="399.3" cy="803.5" r="1.7"/><circle cx="267.6" cy="729.1" r="1.7"/><circle cx="396.8" cy="790.3" r="1.7"/><circle cx="270.7" cy="780.0" r="1.7"/><circle cx="282.4" cy="698.9" r="1.7"/><circle cx="180.6" cy="823.0" r="1.7"/><circle cx="406.5" cy="803.8" r="1.7"/><circle cx="238.3" cy="884.2" r="1.7"/><circle cx="292.4" cy="743.2" r="1.7"/><circle cx="261.2" cy="763.8" r="1.7"/><circle cx="396.3" cy="785.2" r="1.7"/><circle cx="413.7" cy="826.7" r="1.7"/><circle cx="429.9" cy="818.1" r="1.7"/><circle cx="343.7" cy="757.8" r="1.7"/><circle cx="240.5" cy="761.3" r="1.7"/><circle cx="148.6" cy="652.9" r="1.7"/><circle cx="374.8" cy="853.8" r="1.7"/><circle cx="417.4" cy="843.8" r="1.7"/><circle cx="377.4" cy="801.7" r="1.7"/><circle cx="263.8" cy="724.4" r="1.7"/><circle cx="412.4" cy="808.5" r="1.7"/><circle cx="214.8" cy="838.3" r="1.7"/><circle cx="427.2" cy="810.5" r="1.7"/><circle cx="140.6" cy="682.2" r="1.7"/><circle cx="399.3" cy="840.7" r="1.7"/><circle cx="200.7" cy="760.0" r="1.7"/><circle cx="349.0" cy="730.9" r="1.7"/><circle cx="403.8" cy="815.3" r="1.7"/><circle cx="201.5" cy="635.9" r="1.7"/><circle cx="303.1" cy="709.5" r="1.7"/><circle cx="410.0" cy="797.2" r="1.7"/><circle cx="213.7" cy="685.2" r="1.7"/><circle cx="251.3" cy="746.1" r="1.7"/><circle cx="137.6" cy="637.3" r="1.7"/><circle cx="246.8" cy="697.8" r="1.7"/><circle cx="397.1" cy="824.5" r="1.7"/><circle cx="223.2" cy="840.0" r="1.7"/><circle cx="248.4" cy="712.5" r="1.7"/><circle cx="142.5" cy="672.2" r="1.7"/><circle cx="307.2" cy="865.8" r="1.7"/><circle cx="252.1" cy="690.0" r="1.7"/><circle cx="279.0" cy="748.9" r="1.7"/><circle cx="231.8" cy="715.0" r="1.7"/><circle cx="288.0" cy="889.5" r="1.7"/><circle cx="195.7" cy="738.9" r="1.7"/><circle cx="227.0" cy="897.6" r="1.7"/><circle cx="228.5" cy="672.4" r="1.7"/><circle cx="414.3" cy="784.3" r="1.7"/><circle cx="298.7" cy="713.9" r="1.7"/><circle cx="373.6" cy="800.8" r="1.7"/><circle cx="337.0" cy="754.8" r="1.7"/><circle cx="264.5" cy="707.5" r="1.7"/><circle cx="232.5" cy="854.5" r="1.7"/><circle cx="308.0" cy="727.6" r="1.7"/><circle cx="184.3" cy="637.6" r="1.7"/><circle cx="231.8" cy="755.8" r="1.7"/><circle cx="271.9" cy="741.5" r="1.7"/><circle cx="229.4" cy="858.5" r="1.7"/><circle cx="253.3" cy="831.9" r="1.7"/><circle cx="309.8" cy="707.1" r="1.7"/><circle cx="181.7" cy="729.7" r="1.7"/><circle cx="279.4" cy="893.2" r="1.7"/><circle cx="357.6" cy="698.7" r="1.7"/><circle cx="349.4" cy="807.9" r="1.7"/><circle cx="384.6" cy="786.1" r="1.7"/><circle cx="394.6" cy="847.2" r="1.7"/><circle cx="414.5" cy="768.0" r="1.7"/><circle cx="330.3" cy="684.9" r="1.7"/><circle cx="140.2" cy="615.0" r="1.7"/><circle cx="372.1" cy="884.0" r="1.7"/><circle cx="260.4" cy="707.3" r="1.7"/><circle cx="427.0" cy="788.5" r="1.7"/><circle cx="223.7" cy="701.9" r="1.7"/><circle cx="264.9" cy="788.1" r="1.7"/><circle cx="253.4" cy="702.4" r="1.7"/><circle cx="290.4" cy="866.1" r="1.7"/><circle cx="321.9" cy="796.3" r="1.7"/><circle cx="381.6" cy="802.1" r="1.7"/><circle cx="345.5" cy="781.9" r="1.7"/><circle cx="175.8" cy="740.1" r="1.7"/><circle cx="379.0" cy="832.8" r="1.7"/><circle cx="411.7" cy="752.6" r="1.7"/><circle cx="201.0" cy="652.4" r="1.7"/><circle cx="166.5" cy="706.4" r="1.7"/><circle cx="295.5" cy="867.0" r="1.7"/><circle cx="370.9" cy="774.0" r="1.7"/><circle cx="427.3" cy="850.2" r="1.7"/><circle cx="339.1" cy="674.1" r="1.7"/><circle cx="363.3" cy="825.4" r="1.7"/><circle cx="207.0" cy="786.7" r="1.7"/><circle cx="382.2" cy="820.6" r="1.7"/><circle cx="427.2" cy="820.5" r="1.7"/><circle cx="405.1" cy="826.8" r="1.7"/><circle cx="317.7" cy="734.2" r="1.7"/><circle cx="206.7" cy="806.4" r="1.7"/><circle cx="422.1" cy="848.1" r="1.7"/><circle cx="428.1" cy="805.5" r="1.7"/><circle cx="173.7" cy="635.2" r="1.7"/><circle cx="400.5" cy="819.6" r="1.7"/><circle cx="311.8" cy="871.4" r="1.7"/><circle cx="163.4" cy="747.4" r="1.7"/><circle cx="331.1" cy="762.5" r="1.7"/><circle cx="213.2" cy="726.2" r="1.7"/><circle cx="419.7" cy="803.7" r="1.7"/><circle cx="196.8" cy="895.0" r="1.7"/><circle cx="377.3" cy="843.9" r="1.7"/><circle cx="399.5" cy="849.4" r="1.7"/><circle cx="238.6" cy="736.4" r="1.7"/><circle cx="222.0" cy="650.7" r="1.7"/><circle cx="269.5" cy="695.3" r="1.7"/><circle cx="397.7" cy="834.4" r="1.7"/><circle cx="367.6" cy="783.3" r="1.7"/><circle cx="389.6" cy="813.9" r="1.7"/><circle cx="362.1" cy="819.3" r="1.7"/><circle cx="235.7" cy="714.0" r="1.7"/><circle cx="371.5" cy="694.5" r="1.7"/><circle cx="404.4" cy="759.1" r="1.7"/><circle cx="230.5" cy="706.4" r="1.7"/><circle cx="188.8" cy="783.2" r="1.7"/><circle cx="247.8" cy="742.9" r="1.7"/><circle cx="184.1" cy="677.0" r="1.7"/><circle cx="295.1" cy="784.6" r="1.7"/><circle cx="332.5" cy="727.9" r="1.7"/><circle cx="216.1" cy="649.0" r="1.7"/><circle cx="392.8" cy="787.1" r="1.7"/><circle cx="183.3" cy="757.4" r="1.7"/><circle cx="395.2" cy="838.8" r="1.7"/><circle cx="332.6" cy="680.0" r="1.7"/><circle cx="220.8" cy="787.3" r="1.7"/><circle cx="209.5" cy="637.1" r="1.7"/><circle cx="298.3" cy="755.7" r="1.7"/><circle cx="345.5" cy="806.8" r="1.7"/><circle cx="410.6" cy="817.1" r="1.7"/><circle cx="254.2" cy="889.6" r="1.7"/><circle cx="227.8" cy="733.8" r="1.7"/><circle cx="178.7" cy="815.5" r="1.7"/><circle cx="268.9" cy="875.9" r="1.7"/><circle cx="230.1" cy="720.8" r="1.7"/><circle cx="387.8" cy="798.3" r="1.7"/><circle cx="403.3" cy="810.4" r="1.7"/><circle cx="157.2" cy="718.8" r="1.7"/><circle cx="314.7" cy="759.4" r="1.7"/><circle cx="410.1" cy="776.3" r="1.7"/>
</g>
<g fill="#5a1fb4"><circle cx="123.8" cy="602.5" r="1.3"/><circle cx="144.5" cy="580.0" r="1.3"/><circle cx="156.2" cy="583.8" r="1.3"/><circle cx="182.5" cy="580.0" r="1.3"/><circle cx="221.2" cy="590.0" r="1.3"/><circle cx="235.0" cy="590.0" r="1.3"/><circle cx="242.5" cy="587.0" r="1.3"/><circle cx="257.0" cy="570.0" r="1.3"/><circle cx="269.2" cy="587.5" r="1.3"/><circle cx="292.5" cy="605.0" r="1.3"/><circle cx="307.5" cy="601.8" r="1.3"/><circle cx="317.5" cy="606.2" r="1.3"/><circle cx="335.0" cy="604.5" r="1.3"/><circle cx="340.5" cy="605.8" r="1.3"/><circle cx="353.0" cy="553.0" r="1.3"/><circle cx="347.5" cy="527.5" r="1.3"/><circle cx="351.2" cy="510.5" r="1.3"/><circle cx="401.8" cy="525.8" r="1.3"/><circle cx="424.2" cy="518.0" r="1.3"/><circle cx="431.2" cy="503.8" r="1.3"/></g>
<g fill="#27a6a8"><circle cx="433.8" cy="721.0" r="1.3"/><circle cx="430.0" cy="731.0" r="1.3"/><circle cx="431.0" cy="756.0" r="1.3"/><circle cx="430.5" cy="807.5" r="1.3"/><circle cx="430.0" cy="830.0" r="1.3"/><circle cx="432.5" cy="851.2" r="1.3"/><circle cx="446.0" cy="870.0" r="1.3"/><circle cx="461.2" cy="892.5" r="1.3"/><circle cx="445.0" cy="872.0" r="1.3"/><circle cx="427.5" cy="857.5" r="1.3"/><circle cx="407.5" cy="865.0" r="1.3"/><circle cx="328.0" cy="909.5" r="1.3"/><circle cx="297.0" cy="905.0" r="1.3"/><circle cx="177.0" cy="900.0" r="1.3"/><circle cx="192.5" cy="872.0" r="1.3"/><circle cx="140.0" cy="700.0" r="1.3"/><circle cx="120.5" cy="643.8" r="1.3"/><circle cx="126.0" cy="628.8" r="1.3"/><circle cx="130.0" cy="612.5" r="1.3"/></g>
<g fill="#a8a822"><circle cx="489.5" cy="108.5" r="1.3"/><circle cx="625.5" cy="133.0" r="1.3"/><circle cx="693.8" cy="274.2" r="1.3"/><circle cx="710.5" cy="290.5" r="1.3"/><circle cx="746.2" cy="274.2" r="1.3"/><circle cx="799.2" cy="281.0" r="1.3"/><circle cx="819.5" cy="290.5" r="1.3"/><circle cx="833.0" cy="312.2" r="1.3"/><circle cx="442.2" cy="471.2" r="1.3"/><circle cx="446.2" cy="458.8" r="1.3"/><circle cx="450.0" cy="443.2" r="1.3"/><circle cx="498.8" cy="423.0" r="1.3"/><circle cx="487.5" cy="335.0" r="1.3"/><circle cx="475.0" cy="232.2" r="1.3"/><circle cx="483.8" cy="205.0" r="1.3"/><circle cx="493.0" cy="191.2" r="1.3"/></g>
<g fill="#2b93e6"><circle cx="839.6" cy="334.4" r="1.3"/><circle cx="845.2" cy="353.2" r="1.3"/><circle cx="854.0" cy="369.9" r="1.3"/><circle cx="856.0" cy="389.5" r="1.3"/><circle cx="835.5" cy="416.5" r="1.3"/><circle cx="811.9" cy="478.6" r="1.3"/><circle cx="766.2" cy="485.0" r="1.3"/><circle cx="733.8" cy="497.5" r="1.3"/><circle cx="720.0" cy="511.3" r="1.3"/></g>
<circle cx="422.5" cy="660" r="5" fill="#1e90ff" stroke="#fff" stroke-opacity=".6" stroke-width="1.5"/>
<rect x="534.5" y="194.5" width="17.5" height="17.5" fill="#b5b027" stroke="#fff" stroke-opacity=".82" stroke-width="2.5"/>
<rect x="739.8" y="424.8" width="17.5" height="17.5" fill="#2f95e4" stroke="#fff" stroke-opacity=".82" stroke-width="2.5"/>
<rect x="622.8" y="494.6" width="17.5" height="17.5" fill="#e52f2f" stroke="#fff" stroke-opacity=".82" stroke-width="2.5"/>
<rect x="476.2" y="588.2" width="17.5" height="17.5" fill="#33dd33" stroke="#fff" stroke-opacity=".82" stroke-width="2.5"/>
<rect x="253.8" y="630.8" width="17.5" height="17.5" fill="#5a1fb4" stroke="#fff" stroke-opacity=".82" stroke-width="2.5"/>
<rect x="389.8" y="800.0" width="17.5" height="17.5" fill="#27a6a8" stroke="#fff" stroke-opacity=".82" stroke-width="2.5"/>
</svg>
<div class="abs" style="left:-11px;top:-98px;width:0;height:0">
<div class="abs" style="left:23.0px;top:110px;width:29px;height:29px;border-radius:50%;background:#fff;box-shadow:0 1px 3px rgba(0,0,0,.3)"><svg width="17" height="17" viewBox="0 0 17 17" style="position:absolute;left:6px;top:5.500px"><path d="M5.500 9.500V4.200a1 1 0 0 1 2 0V8M7.500 8V3a1 1 0 0 1 2 0v5M9.500 8V3.800a1 1 0 0 1 2 0V8.500M11.500 8.500V5.500a1 1 0 0 1 2 0v5.500c0 3-1.800 4.500-4.300 4.500-2.200 0-3.200-1-4.200-2.800L2.700 9.800c-.5-.9.700-1.600 1.400-.8l1.400 1.700" fill="none" stroke="#555" stroke-width="1"/></svg></div>
<div class="abs" style="left:64.5px;top:110px;width:29px;height:29px;border-radius:50%;background:#238cc3;box-shadow:0 1px 3px rgba(0,0,0,.3)"><svg width="17" height="17" viewBox="0 0 17 17" style="position:absolute;left:6px;top:5.500px"><path d="M2.500 10.500c-1-1.500 0-3.500 1.500-3.500s2.500 2 1.500 3.500-2 1-3 0zM5.500 10.500c1 .8 2 .5 2.500-1L9.500 4c.3-1 1.500-1 2-.2" fill="none" stroke="#fff" stroke-width="1.300"/><path d="M9.500 7l5.500 4.800-2.400.2 1.300 2.700-1.200.6-1.300-2.800-1.900 1.600z" fill="#fff"/></svg></div>
<div class="abs" style="left:105.2px;top:110px;width:29px;height:29px;border-radius:50%;background:#fff;box-shadow:0 1px 3px rgba(0,0,0,.3)"><svg width="17" height="17" viewBox="0 0 17 17" style="position:absolute;left:6px;top:5.500px"><path d="M3 3.500h11v8.500h-4l-1.500 1.800L7 12H3z" fill="none" stroke="#555" stroke-width="1.200"/></svg></div>
<div class="abs" style="left:147.2px;top:110px;width:29px;height:29px;border-radius:50%;background:#fff;box-shadow:0 1px 3px rgba(0,0,0,.3)"><svg width="17" height="17" viewBox="0 0 17 17" style="position:absolute;left:6px;top:5.500px"><path d="M6.500 14.500C4.500 11.500 2.500 9.200 2.500 6.800a4 4 0 0 1 8 0c0 2.400-2 4.700-4 7.700z" fill="none" stroke="#555" stroke-width="1.200"/><circle cx="6.500" cy="6.500" r="1" fill="#555"/><path d="M13 10.500v5M10.500 13h5" stroke="#555" stroke-width="1.200"/></svg></div>
<div class="abs" style="left:188.5px;top:110px;width:29px;height:29px;border-radius:50%;background:#fff;box-shadow:0 2px 4px rgba(0,0,0,.55)"><svg width="17" height="17" viewBox="0 0 17 17" style="position:absolute;left:6px;top:5.500px"><circle cx="7.800" cy="7.500" r="5" fill="none" stroke="#222" stroke-width="1.500"/><path d="M11.500 11.500l3 2.800" stroke="#222" stroke-width="1.800"/><path d="M6 9.500V7.500M7.800 9.500V5.500M9.600 9.500V6.800" stroke="#222" stroke-width="1.200"/></svg></div>
<div class="abs" style="left:229.8px;top:110px;width:29px;height:29px;border-radius:50%;background:#fff;box-shadow:0 1px 3px rgba(0,0,0,.3)"><svg width="17" height="17" viewBox="0 0 17 17" style="position:absolute;left:6px;top:5.500px"><path d="M8.500 3l6 4-6 4-6-4z" fill="none" stroke="#555" stroke-width="1.200"/><path d="M2.500 10.200l6 4 6-4" fill="none" stroke="#555" stroke-width="1.200"/></svg></div>
<div class="abs" style="left:581px;top:110px;width:369px;height:85px;background:rgba(255,255,255,.89)"></div>
<div class="t" id="leg0" style="left:732.5px;top:128px;font-size:12.5px;font-weight:bold;color:#444;letter-spacing:-.32px">Équilibrage</div>
<div class="abs" style="left:590px;top:146px;width:116.500px;height:18px;background:#8dc25a"></div>
<div class="abs" style="left:706.500px;top:146px;width:117px;height:18px;background:#ffb347"></div>
<div class="abs" style="left:823.500px;top:146px;width:117.500px;height:18px;background:#fd5762"></div>
<div class="abs" style="left:706px;top:146px;width:1px;height:30px;background:#555"></div>
<div class="abs" style="left:823px;top:146px;width:1px;height:30px;background:#555"></div>
<div class="t" id="leg1" style="left:629px;top:173px;font-size:12.5px;color:#555;letter-spacing:-.27px">Proche</div>
<div class="t" id="leg2" style="left:862.5px;top:173px;font-size:12.5px;color:#555;letter-spacing:-.41px">Éloigné</div>
<svg class="abs" style="left:929px;top:120px" width="10" height="10" viewBox="0 0 10 10"><path d="M.8.800l8.400 8.400M9.200.8L.8 9.200" stroke="#555" stroke-width="1.100"/></svg>
<div class="abs" style="left:930px;top:821px;width:25px;height:73px;background:rgba(255,255,255,.38);border-radius:3px"></div>
<div class="abs" style="left:933px;top:824px;width:20px;height:20px;background:#52a7db"><svg width="20" height="20" viewBox="0 0 20 20" fill="none" stroke="#fff" stroke-width="1.300"><path d="M3 3l4 4M3 6.500V3h3.500M17 3l-4 4M13.500 3H17v3.500M3 17l4-4M3 13.500V17h3.500M17 17l-4-4M17 13.500V17h-3.500"/></svg></div>
<div class="abs" style="left:933px;top:850px;width:20px;height:20px;background:#52a7db"><svg width="20" height="20" viewBox="0 0 20 20" fill="none" stroke="#fff" stroke-width="1.300"><circle cx="10" cy="10.500" r="7.500"/><path d="M6 10.500h8M10 6.500v8"/></svg></div>
<div class="abs" style="left:933px;top:871px;width:20px;height:20px;background:#52a7db"><svg width="20" height="20" viewBox="0 0 20 20" fill="none" stroke="#fff" stroke-width="1.300"><circle cx="10" cy="10" r="7.500"/><path d="M6 10h8"/></svg></div>
<div class="abs" style="left:891.500px;top:895px;width:63.500px;height:21.500px;background:#52a7db;border-radius:3px"></div>
<div class="abs" style="left:893px;top:898px;width:60.500px;height:17px;border:1px solid #fff;border-top:none"></div>
<div class="t" id="sc" style="left:910.5px;top:901px;font-size:9.500px;color:#fff">20 km</div>
</div>
</div>

<!-- PANEL -->
<div id="panel">
<div class="pbg" style="top:92px;height:36px;background:#fff"></div>
<div class="pbg" style="top:128px;height:14px;background:#f7f7f7;border-top:1px solid #e2e2e2"></div>
<div class="pbg" style="top:142px;height:28px;background:#fff"></div>
<div class="pbg" style="top:196px;height:726px;background:#fafafa"></div>
<div class="abs" style="left:1914px;top:92px;width:1px;height:830px;background:#e0e0e0"></div>
<div class="abs" style="left:965px;top:196px;width:1px;height:726px;background:#cfcfcf"></div>
<div class="t" id="sect" style="left:972px;top:105px;font-size:13px;color:#238cc3;letter-spacing:-.35px">Secteurs (6)</div>
<div class="abs" style="left:965px;top:125px;width:79px;height:3px;background:#238cc3"></div>
<svg class="abs" style="left:1854px;top:106px" width="14" height="14" viewBox="0 0 14 14" fill="none" stroke="#666" stroke-width="1.6"><rect x=".8" y=".8" width="4.8" height="4.8" rx=".8"/><rect x="8.4" y=".8" width="4.8" height="4.8" rx=".8"/><rect x=".8" y="8.4" width="4.8" height="4.8" rx=".8"/><rect x="8.4" y="8.4" width="4.8" height="4.8" rx=".8"/><path d="M2 3.200h2.400M9.600 3.200h2.400M10.800 2v2.400M2.200 9.800l2 2M4.200 9.800l-2 2M9.600 10.800h2.400" stroke-width=".9"/></svg>
<svg class="abs" style="left:1888px;top:106px" width="14" height="14" viewBox="0 0 24 24"><path fill="#666" d="M19.140 12.940c.040-.3.060-.610.060-.940 0-.320-.020-.640-.070-.940l2.030-1.580a.490.490 0 0 0 .120-.610l-1.920-3.320a.488.488 0 0 0-.590-.220l-2.390.960c-.5-.380-1.030-.7-1.620-.940l-.360-2.540a.484.484 0 0 0-.480-.410h-3.840c-.240 0-.430.170-.470.410l-.360 2.540c-.590.240-1.130.570-1.620.940l-2.390-.960c-.220-.080-.470 0-.590.220L2.740 8.870c-.120.210-.080.470.120.610l2.030 1.580c-.050.3-.090.630-.090.940s.020.640.070.940l-2.030 1.580a.490.490 0 0 0-.120.610l1.920 3.320c.120.220.370.290.590.220l2.390-.960c.5.380 1.030.7 1.620.940l.360 2.540c.050.240.240.410.480.410h3.840c.240 0 .440-.170.470-.410l.360-2.540c.590-.240 1.130-.560 1.620-.940l2.390.960c.220.080.470 0 .590-.220l1.920-3.320c.120-.220.070-.470-.120-.610l-2.010-1.580zM12 15.600c-1.980 0-3.600-1.620-3.600-3.600s1.620-3.600 3.600-3.600 3.600 1.620 3.600 3.600-1.620 3.600-3.600 3.600z"/></svg>
<svg class="abs" style="left:975px;top:148px" width="15" height="14" viewBox="0 0 15 14" fill="none" stroke="#aaa" stroke-width="1.2"><path d="M.8 1h9.400L6.600 6v5.500L4.400 10V6z"/><path d="M11.500 9.200v4M9.500 11.200h4" stroke-width="1"/></svg>
<div class="t" id="filt" style="left:995px;top:149px;font-size:12.5px;color:#c6c2c2;letter-spacing:-.2px">Créez vos filtres personnalisés en cliquant ici</div>
<svg class="abs" style="left:1893px;top:148px" width="16" height="14" viewBox="0 0 16 14"><path d="M.5 1h11L7.500 6.500V12L4.500 10V6.500z" fill="#666"/><path d="M11 11.500h4l-2 2z" fill="#666"/></svg>
<div class="abs" style="left:966px;top:170px;width:948px;height:26px;background:#238cc3;border-radius:2px 0 0 0;box-shadow:inset 1px 1px 1px rgba(0,0,0,.15)"></div>
<div class="cb" style="top:174px;border-color:#a08c80"></div>
<svg class="abs" style="left:993px;top:176.5px" width="8" height="10" viewBox="0 0 8 10"><path d="M4 .4L7.600 4.300H.4z" fill="#9ccae6"/><path d="M4 9.600L7.600 5.700H.4z" fill="#9ccae6"/></svg>
<svg class="abs" style="left:1013px;top:175px" width="12.5" height="9" viewBox="0 0 14 10"><path d="M.6 5C2 2.2 4.3.8 7 .8s5 1.4 6.4 4.2C12 7.800 9.700 9.200 7 9.200S2 7.800.6 5z" fill="none" stroke="#fff" stroke-width="1.1"/><circle cx="7" cy="5" r="2.6" fill="none" stroke="#fff" stroke-width="1.1"/><circle cx="7" cy="5" r="1" fill="#fff"/></svg>
<svg class="abs" style="left:1032px;top:176.5px" width="8" height="10" viewBox="0 0 8 10"><path d="M4 .4L7.600 4.300H.4z" fill="#9ccae6"/><path d="M4 9.600L7.600 5.700H.4z" fill="#9ccae6"/></svg>
<div class="th" id="h1" style="left:1071px">Nom</div>
<svg class="abs" style="left:1099px;top:176.5px" width="8" height="10" viewBox="0 0 8 10"><path d="M4 .4L7.600 4.300H.4z" fill="#9ccae6"/><path d="M4 9.600L7.600 5.700H.4z" fill="#9ccae6"/></svg>
<svg class="abs" style="left:1272px;top:176px" width="4" height="12" viewBox="0 0 4 12"><circle cx="2" cy="2" r="1.1" fill="#fff"/><circle cx="2" cy="6" r="1.1" fill="#fff"/><circle cx="2" cy="10" r="1.100" fill="#fff"/></svg>
<div class="th" id="h2" style="left:1296px;letter-spacing:-.55px">Potential</div>
<svg class="abs" style="left:1344px;top:176.5px" width="8" height="10" viewBox="0 0 8 10"><path d="M4 .4L7.600 4.300H.4z" fill="#9ccae6"/><path d="M4 9.600L7.600 5.700H.4z" fill="#9ccae6"/></svg>
<svg class="abs" style="left:1407px;top:176px" width="4" height="12" viewBox="0 0 4 12"><circle cx="2" cy="2" r="1.1" fill="#fff"/><circle cx="2" cy="6" r="1.1" fill="#fff"/><circle cx="2" cy="10" r="1.100" fill="#fff"/></svg>
<div class="th" id="h3" style="left:1431px;letter-spacing:-.86px">Sales Y-1</div>
<svg class="abs" style="left:1479px;top:176.5px" width="8" height="10" viewBox="0 0 8 10"><path d="M4 .4L7.600 4.300H.4z" fill="#9ccae6"/><path d="M4 9.600L7.600 5.700H.4z" fill="#9ccae6"/></svg>
<svg class="abs" style="left:1542px;top:176px" width="4" height="12" viewBox="0 0 4 12"><circle cx="2" cy="2" r="1.1" fill="#fff"/><circle cx="2" cy="6" r="1.1" fill="#fff"/><circle cx="2" cy="10" r="1.100" fill="#fff"/></svg>
<div class="th" id="h4" style="left:1566px;letter-spacing:-.55px">Visit duration</div>
<svg class="abs" style="left:1636px;top:176.5px" width="8" height="10" viewBox="0 0 8 10"><path d="M4 .4L7.600 4.300H.4z" fill="#9ccae6"/><path d="M4 9.600L7.600 5.700H.4z" fill="#9ccae6"/></svg>
<svg class="abs" style="left:1677px;top:176px" width="4" height="12" viewBox="0 0 4 12"><circle cx="2" cy="2" r="1.1" fill="#fff"/><circle cx="2" cy="6" r="1.1" fill="#fff"/><circle cx="2" cy="10" r="1.100" fill="#fff"/></svg>
<div class="th" id="h5" style="left:1701px;letter-spacing:-.57px">Nombre de points</div>
<svg class="abs" style="left:1795px;top:176.5px" width="8" height="10" viewBox="0 0 8 10"><path d="M4 .4L7.600 4.300H.4z" fill="#9ccae6"/><path d="M4 9.600L7.600 5.700H.4z" fill="#9ccae6"/></svg>
<svg class="abs" style="left:1812px;top:176px" width="4" height="12" viewBox="0 0 4 12"><circle cx="2" cy="2" r="1.1" fill="#fff"/><circle cx="2" cy="6" r="1.1" fill="#fff"/><circle cx="2" cy="10" r="1.100" fill="#fff"/></svg>
<div class="row" style="top:196px;background:#fafafa"></div>
<div class="cb" style="top:200px"></div>
<svg class="abs" style="left:1013px;top:201px" width="12.5" height="9" viewBox="0 0 14 10"><path d="M.6 5C2 2.2 4.3.8 7 .8s5 1.4 6.4 4.2C12 7.800 9.700 9.200 7 9.200S2 7.800.6 5z" fill="none" stroke="#333" stroke-width="1.300"/><circle cx="7" cy="5" r="2.600" fill="none" stroke="#333" stroke-width="1.300"/><circle cx="7" cy="5" r="1" fill="#333"/></svg>
<div class="dot" style="top:199px;background:#27a6a8"></div>
<div class="nm" style="top:201px">Céline</div>
<div class="bar" style="top:199px"><i style="width:96px;background:#8dc25a"></i></div>
<div class="dl" style="left:1385px;top:199px"></div><div class="dl" style="left:1405px;top:199px"></div><div class="sl" style="top:199px"></div>
<div class="bv" style="top:201px">243 070</div>
<div class="num" style="left:1473px;top:202px">207 199</div>
<div class="num" style="left:1608px;top:202px">2 150</div>
<div class="num" style="left:1743px;top:202px">215</div>
<div class="row" style="top:222px;background:#f5f5f5"></div>
<div class="cb" style="top:226px"></div>
<svg class="abs" style="left:1013px;top:227px" width="12.5" height="9" viewBox="0 0 14 10"><path d="M.6 5C2 2.2 4.3.8 7 .8s5 1.4 6.4 4.2C12 7.800 9.700 9.200 7 9.200S2 7.800.6 5z" fill="none" stroke="#333" stroke-width="1.300"/><circle cx="7" cy="5" r="2.600" fill="none" stroke="#333" stroke-width="1.300"/><circle cx="7" cy="5" r="1" fill="#333"/></svg>
<div class="dot" style="top:225px;background:#2f95e4"></div>
<div class="nm" style="top:227px">Jérôme</div>
<div class="bar" style="top:225px"><i style="width:93px;background:#ffb347"></i></div>
<div class="dl" style="left:1385px;top:225px"></div><div class="dl" style="left:1405px;top:225px"></div><div class="sl" style="top:225px"></div>
<div class="bv" style="top:227px">236 668</div>
<div class="num" style="left:1473px;top:228px">238 461</div>
<div class="num" style="left:1608px;top:228px">2 450</div>
<div class="num" style="left:1743px;top:228px">245</div>
<div class="row" style="top:248px;background:#fafafa"></div>
<div class="cb" style="top:252px"></div>
<svg class="abs" style="left:1013px;top:253px" width="12.5" height="9" viewBox="0 0 14 10"><path d="M.6 5C2 2.2 4.3.8 7 .8s5 1.4 6.4 4.2C12 7.800 9.700 9.200 7 9.200S2 7.800.6 5z" fill="none" stroke="#333" stroke-width="1.300"/><circle cx="7" cy="5" r="2.600" fill="none" stroke="#333" stroke-width="1.300"/><circle cx="7" cy="5" r="1" fill="#333"/></svg>
<div class="dot" style="top:251px;background:#33dd33"></div>
<div class="nm" style="top:253px">Karine</div>
<div class="bar" style="top:251px"><i style="width:81.5px;background:#fd5762"></i></div>
<div class="dl" style="left:1385px;top:251px"></div><div class="dl" style="left:1405px;top:251px"></div><div class="sl" style="top:251px"></div>
<div class="bv" style="top:253px">208 758</div>
<div class="num" style="left:1473px;top:254px">202 918</div>
<div class="num" style="left:1608px;top:254px">1 920</div>
<div class="num" style="left:1743px;top:254px">192</div>
<div class="row" style="top:274px;background:#f5f5f5"></div>
<div class="cb" style="top:278px"></div>
<svg class="abs" style="left:1013px;top:279px" width="12.5" height="9" viewBox="0 0 14 10"><path d="M.6 5C2 2.2 4.3.8 7 .8s5 1.4 6.4 4.2C12 7.800 9.700 9.200 7 9.200S2 7.800.6 5z" fill="none" stroke="#333" stroke-width="1.300"/><circle cx="7" cy="5" r="2.600" fill="none" stroke="#333" stroke-width="1.300"/><circle cx="7" cy="5" r="1" fill="#333"/></svg>
<div class="dot" style="top:277px;background:#e52f2f"></div>
<div class="nm" style="top:279px">Laura</div>
<div class="bar" style="top:277px"><i style="width:123px;background:#fd5762"></i></div>
<div class="dl" style="left:1385px;top:277px"></div><div class="dl" style="left:1405px;top:277px"></div><div class="sl" style="top:277px"></div>
<div class="bv" style="top:279px">311 530</div>
<div class="num" style="left:1473px;top:280px">303 828</div>
<div class="num" style="left:1608px;top:280px">2 580</div>
<div class="num" style="left:1743px;top:280px">258</div>
<div class="row" style="top:300px;background:#fafafa"></div>
<div class="cb" style="top:304px"></div>
<svg class="abs" style="left:1013px;top:305px" width="12.5" height="9" viewBox="0 0 14 10"><path d="M.6 5C2 2.2 4.3.8 7 .8s5 1.4 6.4 4.2C12 7.800 9.700 9.200 7 9.200S2 7.800.6 5z" fill="none" stroke="#333" stroke-width="1.300"/><circle cx="7" cy="5" r="2.600" fill="none" stroke="#333" stroke-width="1.300"/><circle cx="7" cy="5" r="1" fill="#333"/></svg>
<div class="dot" style="top:303px;background:#b5b027"></div>
<div class="nm" style="top:305px">Nicolas</div>
<div class="bar" style="top:303px"><i style="width:110px;background:#ffb347"></i></div>
<div class="dl" style="left:1385px;top:303px"></div><div class="dl" style="left:1405px;top:303px"></div><div class="sl" style="top:303px"></div>
<div class="bv" style="top:305px">279 434</div>
<div class="num" style="left:1473px;top:306px">285 235</div>
<div class="num" style="left:1608px;top:306px">2 310</div>
<div class="num" style="left:1743px;top:306px">231</div>
<div class="row" style="top:326px;background:#f5f5f5"></div>
<div class="cb" style="top:330px"></div>
<svg class="abs" style="left:1013px;top:331px" width="12.5" height="9" viewBox="0 0 14 10"><path d="M.6 5C2 2.2 4.3.8 7 .8s5 1.4 6.4 4.2C12 7.800 9.700 9.200 7 9.200S2 7.800.6 5z" fill="none" stroke="#333" stroke-width="1.300"/><circle cx="7" cy="5" r="2.600" fill="none" stroke="#333" stroke-width="1.300"/><circle cx="7" cy="5" r="1" fill="#333"/></svg>
<div class="dot" style="top:329px;background:#5a1fb4"></div>
<div class="nm" style="top:331px">Sébastien</div>
<div class="bar" style="top:329px"><i style="width:94.5px;background:#8dc25a"></i></div>
<div class="dl" style="left:1385px;top:329px"></div><div class="dl" style="left:1405px;top:329px"></div><div class="sl" style="top:329px"></div>
<div class="bv" style="top:331px">241 604</div>
<div class="num" style="left:1473px;top:332px">357 003</div>
<div class="num" style="left:1608px;top:332px">2 950</div>
<div class="num" style="left:1743px;top:332px">295</div>
<div class="tot" style="left:1338px">1 521 064</div>
<div class="tot" style="left:1473px">1 594 644</div>
<div class="tot" style="left:1608px">14 360</div>
<div class="tot" style="left:1743px">1 436</div>
</div>

<div id="footer"></div>
<svg class="abs" style="left:1795px;top:928px" width="15" height="17" viewBox="0 0 15 17"><path d="M13 1C9 4.500 9 12 13 15.500" fill="none" stroke="#fff" stroke-width="1.300"/><path d="M1.800 1.800l5 3M.8 8.300h5.700M1.800 15l5-3" stroke="#fff" stroke-width="1.200"/></svg>
<div class="t" id="geo" style="left:1808px;top:929px;font-size:13.500px;color:#fff;letter-spacing:.55px"><span style="font-size:10px">G</span>eoconcept</div>
</body>
</html>
